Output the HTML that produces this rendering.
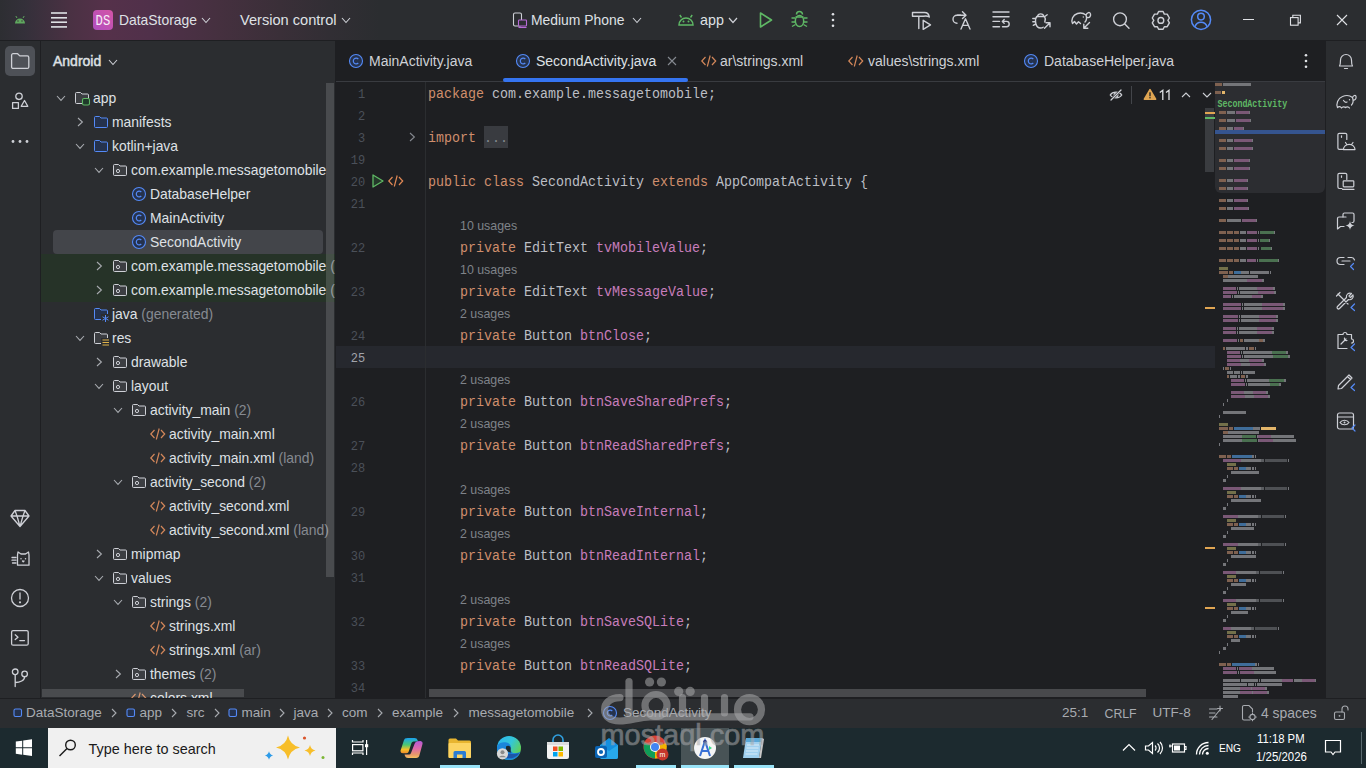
<!DOCTYPE html>
<html><head><meta charset="utf-8">
<style>
*{margin:0;padding:0;box-sizing:border-box}
html,body{width:1366px;height:768px;overflow:hidden;background:#1e1f22;font-family:"Liberation Sans",sans-serif}
.a{position:absolute}
.tx{position:absolute;white-space:pre;line-height:20px}
svg{position:absolute;overflow:visible}
</style></head><body>
<div class="a" style="left:0px;top:0px;width:1366px;height:40px;background:#2b2d30;"></div>
<div class="a" style="left:0;top:0;width:1366px;height:40px;background:linear-gradient(90deg,#2d2e32 0px,#34303a 25px,#4a3143 70px,#55314a 105px,#50304a 150px,#45303f 220px,#3a2f38 280px,#312e34 330px,#2b2d30 380px)"></div>
<div class="a" style="left:0px;top:40px;width:1366px;height:1px;background:#1e1f22;"></div>
<svg style="left:14px;top:14px;" width="12" height="10" viewBox="0 0 12 10"><path d="M1 9.5 A5 5 0 0 1 11 9.5 Z" fill="#5fa85f"/><path d="M3 4 L1.8 2 M9 4 L10.2 2" stroke="#5fa85f" stroke-width="1"/><circle cx="4" cy="7" r="0.7" fill="#3a3035"/><circle cx="8" cy="7" r="0.7" fill="#3a3035"/></svg>
<svg style="left:50px;top:11px;" width="18" height="18" viewBox="0 0 18 18"><rect x="1" y="1.2" width="16" height="1.6" fill="#dfe1e5"/><rect x="1" y="6" width="16" height="1.6" fill="#dfe1e5"/><rect x="1" y="10.4" width="16" height="1.6" fill="#dfe1e5"/><rect x="1" y="15.1" width="16" height="1.6" fill="#dfe1e5"/></svg>
<div class="a" style="left:93px;top:10px;width:20px;height:20px;border-radius:4px;background:linear-gradient(225deg,#d454a6,#b04fc0)"></div>
<div class="tx" style="left:95.6px;top:11.75px;font-size:12.2px;color:#f8eef8;font-family:'Liberation Mono',monospace;transform:scaleY(1.2);transform-origin:0 13.2px;">DS</div>
<div class="tx" style="left:119px;top:10.18px;font-size:13.9px;color:#dfe1e5;font-family:'Liberation Sans',sans-serif;">DataStorage</div>
<svg style="left:201.0px;top:16.75px;" width="10" height="6.5" viewBox="0 0 10 6.5"><path d="M1 1 L5.0 5.5 L9 1" fill="none" stroke="#ced0d6" stroke-width="1.1"/></svg>
<div class="tx" style="left:240px;top:9.94px;font-size:14.6px;color:#dfe1e5;font-family:'Liberation Sans',sans-serif;">Version control</div>
<svg style="left:341.0px;top:16.75px;" width="10" height="6.5" viewBox="0 0 10 6.5"><path d="M1 1 L5.0 5.5 L9 1" fill="none" stroke="#ced0d6" stroke-width="1.1"/></svg>
<svg style="left:512px;top:12px;" width="16" height="17" viewBox="0 0 16 17"><rect x="1.5" y="1" width="8" height="13" rx="1.5" fill="none" stroke="#ced0d6" stroke-width="1.1"/><rect x="6.5" y="8" width="8" height="6" rx="0.8" fill="#2b2d30" stroke="#b86bd8" stroke-width="1.1"/><path d="M6.5 15.5 H14.5" stroke="#b86bd8" stroke-width="1.1"/></svg>
<div class="tx" style="left:531px;top:10.18px;font-size:13.9px;color:#dfe1e5;font-family:'Liberation Sans',sans-serif;">Medium Phone</div>
<svg style="left:632.0px;top:16.75px;" width="10" height="6.5" viewBox="0 0 10 6.5"><path d="M1 1 L5.0 5.5 L9 1" fill="none" stroke="#ced0d6" stroke-width="1.1"/></svg>
<svg style="left:677px;top:10px;" width="18" height="17" viewBox="0 0 18 17"><path d="M2 15 A7 7 0 0 1 16 15 Z" fill="none" stroke="#5fb865" stroke-width="1.5"/><path d="M4.5 7.5 L2.8 5 M13.5 7.5 L15.2 5" stroke="#5fb865" stroke-width="1.4"/><circle cx="6.5" cy="11.5" r="1" fill="#5fb865"/><circle cx="11.5" cy="11.5" r="1" fill="#5fb865"/></svg>
<div class="tx" style="left:700px;top:10.05px;font-size:14.3px;color:#dfe1e5;font-family:'Liberation Sans',sans-serif;">app</div>
<svg style="left:728.0px;top:16.75px;" width="10" height="6.5" viewBox="0 0 10 6.5"><path d="M1 1 L5.0 5.5 L9 1" fill="none" stroke="#ced0d6" stroke-width="1.2"/></svg>
<svg style="left:758px;top:11px;" width="16" height="18" viewBox="0 0 16 18"><path d="M2.5 2 L13.5 9 L2.5 16 Z" fill="none" stroke="#5fb865" stroke-width="1.6" stroke-linejoin="round"/></svg>
<svg style="left:790px;top:10px;" width="19" height="19" viewBox="0 0 19 19"><ellipse cx="9.5" cy="11" rx="4.2" ry="5.5" fill="none" stroke="#5fb865" stroke-width="1.5"/><path d="M6.5 4.5 A3 3 0 0 1 12.5 4.5" fill="none" stroke="#5fb865" stroke-width="1.5"/><path d="M1.5 8 H5 M14 8 H17.5 M1.5 12 H5 M14 12 H17.5 M2 16.5 L5.5 14.5 M17 16.5 L13.5 14.5 M5.5 7 H13.5" stroke="#5fb865" stroke-width="1.4"/></svg>
<svg style="left:831px;top:12px;" width="4" height="16" viewBox="0 0 4 16"><circle cx="2" cy="2.2" r="1.3" fill="#dfe1e5"/><circle cx="2" cy="8" r="1.3" fill="#dfe1e5"/><circle cx="2" cy="13.8" r="1.3" fill="#dfe1e5"/></svg>
<svg style="left:0px;top:0px;" width="1366" height="40" viewBox="0 0 1366 40"><path d="M912.5 12.5 H924.5 C927 12.5 929 14.5 929.3 17 C927.5 15.8 925.5 15.8 923.5 16.2 H912.5 Z M918.8 16.5 V28.5" stroke="#ced0d6" stroke-width="1.4" fill="none" stroke-linecap="round" stroke-linejoin="round"/><path d="M923.2 20.3 L930.5 24.8 L923.2 29.3 Z" stroke="#ced0d6" stroke-width="1.4" fill="none" stroke-linecap="round" stroke-linejoin="round"/><path d="M960.5 15.2 H957 A4 4 0 0 0 957 23.2" stroke="#ced0d6" stroke-width="1.4" fill="none" stroke-linecap="round" stroke-linejoin="round"/><path d="M957.5 15.2 H966 M962.5 11.8 L966 15.2 L962.5 18.6" stroke="#ced0d6" stroke-width="1.4" fill="none" stroke-linecap="round" stroke-linejoin="round"/><path d="M961 29 L965.5 18.8 L970 29 M962.6 25.4 H968.4" stroke="#ced0d6" stroke-width="1.4" fill="none" stroke-linecap="round" stroke-linejoin="round"/><path d="M993 12 H1009 M993 16.7 H1009 M993 21.4 H999.5 M993 26.8 H999.5" stroke="#ced0d6" stroke-width="1.4" fill="none" stroke-linecap="round" stroke-linejoin="round"/><path d="M1002.5 21.4 H1006.5 A2.7 2.7 0 0 1 1006.5 26.8 H1002.5 M1004.2 19.6 L1002.3 21.4 L1004.2 23.2" stroke="#ced0d6" stroke-width="1.4" fill="none" stroke-linecap="round" stroke-linejoin="round"/><path d="M1044.8 22 C1045.5 19.5 1045.5 17.8 1044.5 16.5 H1036.8 C1035.5 18 1035.3 21 1035.8 23.5 C1036.5 26.5 1038.5 28 1040.5 28 C1041.5 28 1042.5 27.7 1043.2 27.2" stroke="#ced0d6" stroke-width="1.4" fill="none" stroke-linecap="round" stroke-linejoin="round"/><path d="M1037.5 16.5 A3.2 3.2 0 0 1 1043.8 16.5 M1032.8 18.5 H1035.5 M1032.8 21.8 H1035.3 M1033.2 25.3 L1035.8 24 M1045.5 16 L1047.2 14.8" stroke="#ced0d6" stroke-width="1.4" fill="none" stroke-linecap="round" stroke-linejoin="round"/><path d="M1044.5 28.2 L1050 22.7 M1046 22.7 H1050 V26.7" stroke="#ced0d6" stroke-width="1.4" fill="none" stroke-linecap="round" stroke-linejoin="round"/><path d="M1072.5 23.5 C1071 20 1072.5 15 1077.5 13.5 C1081 12.5 1084 13.5 1086 15 C1087 12.5 1090 11.5 1090.5 14 C1091 16 1089.5 18 1087.5 17.5 M1086 15 C1087 18 1086.5 20.5 1085 22 M1072.5 23.5 L1074.5 21.5 L1076.5 24 L1078.5 21.8 L1080.5 23.5" stroke="#ced0d6" stroke-width="1.4" fill="none" stroke-linecap="round" stroke-linejoin="round"/><circle cx="1083.3" cy="17" r="0.7" fill="#ced0d6"/><path d="M1089.5 22.5 L1083.8 28.2 M1083.8 24.2 V28.2 H1087.8" stroke="#ced0d6" stroke-width="1.4" fill="none" stroke-linecap="round" stroke-linejoin="round"/><circle cx="1120" cy="19.3" r="6.4" stroke="#ced0d6" stroke-width="1.4" fill="none" stroke-linecap="round" stroke-linejoin="round" stroke-width="1.5"/><path d="M1124.8 24.1 L1129 28.3" stroke="#ced0d6" stroke-width="1.4" fill="none" stroke-linecap="round" stroke-linejoin="round" stroke-width="1.6"/><path d="M1158.6 11.5 H1163.1 L1164.3 14.1 L1167.2 14.1 L1169.4 18 L1167.9 20.4 L1169.4 22.8 L1167.2 26.7 L1164.3 26.7 L1163.1 29.3 H1158.6 L1157.4 26.7 L1154.5 26.7 L1152.3 22.8 L1153.8 20.4 L1152.3 18 L1154.5 14.1 L1157.4 14.1 Z" stroke="#ced0d6" stroke-width="1.4" fill="none" stroke-linecap="round" stroke-linejoin="round" stroke-width="1.4"/><circle cx="1160.85" cy="20.4" r="2.9" stroke="#ced0d6" stroke-width="1.4" fill="none" stroke-linecap="round" stroke-linejoin="round" stroke-width="1.4"/><circle cx="1201" cy="19.8" r="9.6" fill="none" stroke="#548af7" stroke-width="1.5"/><circle cx="1201" cy="16.6" r="3.3" fill="none" stroke="#548af7" stroke-width="1.5"/><path d="M1195 26.8 C1196 23.5 1198.5 22.3 1201 22.3 C1203.5 22.3 1206 23.5 1207 26.8" fill="none" stroke="#548af7" stroke-width="1.5"/></svg>
<div class="a" style="left:1243px;top:19px;width:11px;height:1px;background:#dfe1e5;"></div>
<svg style="left:1289px;top:14px;" width="13" height="13" viewBox="0 0 13 13"><rect x="1.5" y="3.6" width="7.6" height="7.6" fill="none" stroke="#dfe1e5" stroke-width="1.1"/><path d="M3.8 3.6 V1.3 H11.4 V8.9 H9.1" fill="none" stroke="#dfe1e5" stroke-width="1.1"/></svg>
<svg style="left:1336px;top:14px;" width="12" height="12" viewBox="0 0 12 12"><path d="M1 1 L11 11 M11 1 L1 11" stroke="#dfe1e5" stroke-width="1.1"/></svg>
<div class="a" style="left:0px;top:41px;width:40px;height:658px;background:#2b2d30;"></div>
<div class="a" style="left:40px;top:41px;width:1px;height:658px;background:#1e1f22;"></div>
<div class="a" style="left:5px;top:46px;width:30px;height:30px;background:#4e5157;border-radius:5px"></div>
<svg style="left:10px;top:52px;" width="20" height="18" viewBox="0 0 20 18"><path d="M1.6 3.2 A1.5 1.5 0 0 1 3.1 1.7 H7.6 L9.8 3.9 H17.3 A1.5 1.5 0 0 1 18.8 5.4 V14.9 A1.5 1.5 0 0 1 17.3 16.4 H3.1 A1.5 1.5 0 0 1 1.6 14.9 Z" stroke="#ced0d6" stroke-width="1.3" fill="none" stroke-linejoin="round" stroke-linecap="round" stroke-width="1.4"/></svg>
<svg style="left:9px;top:91px;" width="22" height="20" viewBox="0 0 22 20"><circle cx="10" cy="5.3" r="3.2" stroke="#ced0d6" stroke-width="1.3" fill="none" stroke-linejoin="round" stroke-linecap="round"/><rect x="3.6" y="11.6" width="5.8" height="5.8" stroke="#ced0d6" stroke-width="1.3" fill="none" stroke-linejoin="round" stroke-linecap="round"/><path d="M15.5 9.5 L18.8 15.3 H12.2 Z" stroke="#ced0d6" stroke-width="1.3" fill="none" stroke-linejoin="round" stroke-linecap="round"/></svg>
<svg style="left:10px;top:139px;" width="20" height="5" viewBox="0 0 20 5"><circle cx="3" cy="2.5" r="1.4" fill="#ced0d6"/><circle cx="10" cy="2.5" r="1.4" fill="#ced0d6"/><circle cx="17" cy="2.5" r="1.4" fill="#ced0d6"/></svg>
<svg style="left:9px;top:508px;" width="22" height="20" viewBox="0 0 22 20"><path d="M6 2.5 H16 L20 8 L11 18.5 L2 8 Z M2 8 H20 M6 2.5 L8 8 L11 18.5 L14 8 L16 2.5" stroke="#ced0d6" stroke-width="1.3" fill="none" stroke-linejoin="round" stroke-linecap="round"/></svg>
<svg style="left:10px;top:550px;" width="22" height="18" viewBox="0 0 22 18"><path d="M7.5 5 L8 2 L11 4 H15.5 L18.5 2 L19 5 V15.2 H7.5 Z" stroke="#ced0d6" stroke-width="1.3" fill="none" stroke-linejoin="round" stroke-linecap="round"/><path d="M2 7.5 H6 M2 10.2 H6 M2.5 13 H6" stroke="#ced0d6" stroke-width="1.3" fill="none" stroke-linejoin="round" stroke-linecap="round"/><circle cx="11" cy="8.8" r="0.75" fill="#ced0d6"/><circle cx="15.5" cy="8.8" r="0.75" fill="#ced0d6"/><path d="M12.5 11 L13.25 11.8 L14 11" stroke="#ced0d6" stroke-width="1.3" fill="none" stroke-linejoin="round" stroke-linecap="round" stroke-width="1"/></svg>
<svg style="left:9px;top:587px;" width="22" height="22" viewBox="0 0 22 22"><circle cx="11" cy="11" r="8.5" stroke="#ced0d6" stroke-width="1.3" fill="none" stroke-linejoin="round" stroke-linecap="round"/><path d="M11 6 V12" stroke="#ced0d6" stroke-width="1.3" fill="none" stroke-linejoin="round" stroke-linecap="round" stroke-width="1.8"/><circle cx="11" cy="15.3" r="1.1" fill="#ced0d6"/></svg>
<svg style="left:9px;top:628px;" width="22" height="20" viewBox="0 0 22 20"><rect x="2.6" y="2.6" width="16.6" height="14.6" rx="1.5" stroke="#ced0d6" stroke-width="1.3" fill="none" stroke-linejoin="round" stroke-linecap="round"/><path d="M6.2 6.8 L9 9.2 L6.2 11.6 M10.8 12.6 H15.5" stroke="#ced0d6" stroke-width="1.3" fill="none" stroke-linejoin="round" stroke-linecap="round"/></svg>
<svg style="left:9px;top:667px;" width="22" height="22" viewBox="0 0 22 22"><circle cx="6.2" cy="4.8" r="2.8" stroke="#ced0d6" stroke-width="1.3" fill="none" stroke-linejoin="round" stroke-linecap="round"/><circle cx="15.6" cy="6.9" r="2.8" stroke="#ced0d6" stroke-width="1.3" fill="none" stroke-linejoin="round" stroke-linecap="round"/><path d="M6.2 7.6 V19.5 M15.6 9.7 C15.6 13.5 11 15.5 6.2 15.5" stroke="#ced0d6" stroke-width="1.3" fill="none" stroke-linejoin="round" stroke-linecap="round"/></svg>
<div class="a" style="left:41px;top:41px;width:294px;height:658px;background:#2b2d30;"></div>
<div class="a" style="left:335px;top:41px;width:1px;height:658px;background:#1e1f22;"></div>
<div class="tx" style="left:53px;top:51.15px;font-size:14.0px;color:#dfe1e5;font-family:'Liberation Sans',sans-serif;-webkit-text-stroke:0.45px #dfe1e5;">Android</div>
<svg style="left:108.0px;top:58.75px;" width="10" height="6.5" viewBox="0 0 10 6.5"><path d="M1 1 L5.0 5.5 L9 1" fill="none" stroke="#ced0d6" stroke-width="1.1"/></svg>
<div class="a" style="left:41px;top:254px;width:294px;height:48px;background:#263328;"></div>
<div class="a" style="left:53px;top:230px;width:270px;height:24px;background:#43454a;border-radius:4px"></div>
<div class="a" style="left:41px;top:83px;width:294px;height:615px;overflow:hidden">
<svg style="left:15.0px;top:11.8px;" width="10" height="6.4" viewBox="0 0 10 6.4"><path d="M1 1 L5.0 5.4 L9 1" fill="none" stroke="#a8abb0" stroke-width="1.1"/></svg>
<svg style="left:33px;top:8px;" width="18" height="16" viewBox="0 0 18 16"><path d="M1.5 2.5 A1 1 0 0 1 2.5 1.5 H6.5 L8 3 H13.5 A1 1 0 0 1 14.5 4 V11.5 A1 1 0 0 1 13.5 12.5 H2.5 A1 1 0 0 1 1.5 11.5 Z" fill="#3c3e42" stroke="#ced0d6" stroke-width="1.0"/><rect x="8.5" y="7.5" width="7" height="6.5" rx="1.5" fill="#1f3a2a" stroke="#5fb865" stroke-width="1.1"/></svg>
<div class="tx" style="left:52px;top:5.08px;font-size:13.9px;color:#dfe1e5;font-family:'Liberation Sans',sans-serif;">app</div>
<svg style="left:35.8px;top:34.0px;" width="6.4" height="10" viewBox="0 0 6.4 10"><path d="M1 1 L5.4 5.0 L1 9" fill="none" stroke="#a8abb0" stroke-width="1.1"/></svg>
<svg style="left:52px;top:32px;" width="16" height="14" viewBox="0 0 16 14"><path d="M1.5 2.5 A1 1 0 0 1 2.5 1.5 H6.5 L8 3 H13.5 A1 1 0 0 1 14.5 4 V11.5 A1 1 0 0 1 13.5 12.5 H2.5 A1 1 0 0 1 1.5 11.5 Z" fill="#25324d" stroke="#548af7" stroke-width="1.0"/></svg>
<div class="tx" style="left:71px;top:29.08px;font-size:13.9px;color:#dfe1e5;font-family:'Liberation Sans',sans-serif;">manifests</div>
<svg style="left:34.0px;top:59.8px;" width="10" height="6.4" viewBox="0 0 10 6.4"><path d="M1 1 L5.0 5.4 L9 1" fill="none" stroke="#a8abb0" stroke-width="1.1"/></svg>
<svg style="left:52px;top:56px;" width="16" height="14" viewBox="0 0 16 14"><path d="M1.5 2.5 A1 1 0 0 1 2.5 1.5 H6.5 L8 3 H13.5 A1 1 0 0 1 14.5 4 V11.5 A1 1 0 0 1 13.5 12.5 H2.5 A1 1 0 0 1 1.5 11.5 Z" fill="#25324d" stroke="#548af7" stroke-width="1.0"/></svg>
<div class="tx" style="left:71px;top:53.08px;font-size:13.9px;color:#dfe1e5;font-family:'Liberation Sans',sans-serif;">kotlin+java</div>
<svg style="left:53.0px;top:83.8px;" width="10" height="6.4" viewBox="0 0 10 6.4"><path d="M1 1 L5.0 5.4 L9 1" fill="none" stroke="#a8abb0" stroke-width="1.1"/></svg>
<svg style="left:71px;top:80px;" width="16" height="14" viewBox="0 0 16 14"><path d="M1.5 2.5 A1 1 0 0 1 2.5 1.5 H6.5 L8 3 H13.5 A1 1 0 0 1 14.5 4 V11.5 A1 1 0 0 1 13.5 12.5 H2.5 A1 1 0 0 1 1.5 11.5 Z" fill="#3c3e42" stroke="#ced0d6" stroke-width="1.0"/><circle cx="6" cy="8" r="1.6" fill="none" stroke="#ced0d6" stroke-width="1"/></svg>
<div class="tx" style="left:90px;top:77.08px;font-size:13.9px;color:#dfe1e5;font-family:'Liberation Sans',sans-serif;">com.example.messagetomobile</div>
<svg style="left:90px;top:103px;" width="16" height="16" viewBox="0 0 16 16"><circle cx="8" cy="8" r="6.5" fill="#25324d" stroke="#548af7" stroke-width="1.1"/><path d="M10.3 6 A2.9 2.9 0 1 0 10.3 10" fill="none" stroke="#548af7" stroke-width="1.2"/></svg>
<div class="tx" style="left:109px;top:101.08px;font-size:13.9px;color:#dfe1e5;font-family:'Liberation Sans',sans-serif;">DatabaseHelper</div>
<svg style="left:90px;top:127px;" width="16" height="16" viewBox="0 0 16 16"><circle cx="8" cy="8" r="6.5" fill="#25324d" stroke="#548af7" stroke-width="1.1"/><path d="M10.3 6 A2.9 2.9 0 1 0 10.3 10" fill="none" stroke="#548af7" stroke-width="1.2"/></svg>
<div class="tx" style="left:109px;top:125.08px;font-size:13.9px;color:#dfe1e5;font-family:'Liberation Sans',sans-serif;">MainActivity</div>
<svg style="left:90px;top:151px;" width="16" height="16" viewBox="0 0 16 16"><circle cx="8" cy="8" r="6.5" fill="#25324d" stroke="#548af7" stroke-width="1.1"/><path d="M10.3 6 A2.9 2.9 0 1 0 10.3 10" fill="none" stroke="#548af7" stroke-width="1.2"/></svg>
<div class="tx" style="left:109px;top:149.08px;font-size:13.9px;color:#dfe1e5;font-family:'Liberation Sans',sans-serif;">SecondActivity</div>
<svg style="left:54.8px;top:178.0px;" width="6.4" height="10" viewBox="0 0 6.4 10"><path d="M1 1 L5.4 5.0 L1 9" fill="none" stroke="#a8abb0" stroke-width="1.1"/></svg>
<svg style="left:71px;top:176px;" width="16" height="14" viewBox="0 0 16 14"><path d="M1.5 2.5 A1 1 0 0 1 2.5 1.5 H6.5 L8 3 H13.5 A1 1 0 0 1 14.5 4 V11.5 A1 1 0 0 1 13.5 12.5 H2.5 A1 1 0 0 1 1.5 11.5 Z" fill="#3c3e42" stroke="#ced0d6" stroke-width="1.0"/><circle cx="6" cy="8" r="1.6" fill="none" stroke="#ced0d6" stroke-width="1"/></svg>
<div class="tx" style="left:90px;top:173.08px;font-size:13.9px;color:#dfe1e5;font-family:'Liberation Sans',sans-serif;">com.example.messagetomobile<span style="color:#868a91"> (</span></div>
<svg style="left:54.8px;top:202.0px;" width="6.4" height="10" viewBox="0 0 6.4 10"><path d="M1 1 L5.4 5.0 L1 9" fill="none" stroke="#a8abb0" stroke-width="1.1"/></svg>
<svg style="left:71px;top:200px;" width="16" height="14" viewBox="0 0 16 14"><path d="M1.5 2.5 A1 1 0 0 1 2.5 1.5 H6.5 L8 3 H13.5 A1 1 0 0 1 14.5 4 V11.5 A1 1 0 0 1 13.5 12.5 H2.5 A1 1 0 0 1 1.5 11.5 Z" fill="#3c3e42" stroke="#ced0d6" stroke-width="1.0"/><circle cx="6" cy="8" r="1.6" fill="none" stroke="#ced0d6" stroke-width="1"/></svg>
<div class="tx" style="left:90px;top:197.08px;font-size:13.9px;color:#dfe1e5;font-family:'Liberation Sans',sans-serif;">com.example.messagetomobile<span style="color:#868a91"> (</span></div>
<svg style="left:52px;top:224px;" width="18" height="16" viewBox="0 0 18 16"><path d="M1.5 2.5 A1 1 0 0 1 2.5 1.5 H6.5 L8 3 H13.5 A1 1 0 0 1 14.5 4 V11.5 A1 1 0 0 1 13.5 12.5 H2.5 A1 1 0 0 1 1.5 11.5 Z" fill="#25324d" stroke="#548af7" stroke-width="1.0"/><rect x="8" y="7" width="9" height="9" fill="#2b2d30"/><path d="M12.5 8 V15 M9.5 9.8 L15.5 13.2 M15.5 9.8 L9.5 13.2" stroke="#548af7" stroke-width="1"/></svg>
<div class="tx" style="left:71px;top:221.08px;font-size:13.9px;color:#dfe1e5;font-family:'Liberation Sans',sans-serif;">java<span style="color:#868a91"> (generated)</span></div>
<svg style="left:34.0px;top:251.8px;" width="10" height="6.4" viewBox="0 0 10 6.4"><path d="M1 1 L5.0 5.4 L9 1" fill="none" stroke="#a8abb0" stroke-width="1.1"/></svg>
<svg style="left:52px;top:248px;" width="18" height="16" viewBox="0 0 18 16"><path d="M1.5 2.5 A1 1 0 0 1 2.5 1.5 H6.5 L8 3 H13.5 A1 1 0 0 1 14.5 4 V11.5 A1 1 0 0 1 13.5 12.5 H2.5 A1 1 0 0 1 1.5 11.5 Z" fill="#3c3e42" stroke="#ced0d6" stroke-width="1.0"/><rect x="8" y="7" width="9" height="9" fill="#2b2d30"/><path d="M9.5 9 H16 M9.5 11.5 H16 M9.5 14 H16" stroke="#e0b34a" stroke-width="1.2"/></svg>
<div class="tx" style="left:71px;top:245.08px;font-size:13.9px;color:#dfe1e5;font-family:'Liberation Sans',sans-serif;">res</div>
<svg style="left:54.8px;top:274.0px;" width="6.4" height="10" viewBox="0 0 6.4 10"><path d="M1 1 L5.4 5.0 L1 9" fill="none" stroke="#a8abb0" stroke-width="1.1"/></svg>
<svg style="left:71px;top:272px;" width="16" height="14" viewBox="0 0 16 14"><path d="M1.5 2.5 A1 1 0 0 1 2.5 1.5 H6.5 L8 3 H13.5 A1 1 0 0 1 14.5 4 V11.5 A1 1 0 0 1 13.5 12.5 H2.5 A1 1 0 0 1 1.5 11.5 Z" fill="#3c3e42" stroke="#ced0d6" stroke-width="1.0"/><circle cx="6" cy="8" r="1.6" fill="none" stroke="#ced0d6" stroke-width="1"/></svg>
<div class="tx" style="left:90px;top:269.08px;font-size:13.9px;color:#dfe1e5;font-family:'Liberation Sans',sans-serif;">drawable</div>
<svg style="left:53.0px;top:299.8px;" width="10" height="6.4" viewBox="0 0 10 6.4"><path d="M1 1 L5.0 5.4 L9 1" fill="none" stroke="#a8abb0" stroke-width="1.1"/></svg>
<svg style="left:71px;top:296px;" width="16" height="14" viewBox="0 0 16 14"><path d="M1.5 2.5 A1 1 0 0 1 2.5 1.5 H6.5 L8 3 H13.5 A1 1 0 0 1 14.5 4 V11.5 A1 1 0 0 1 13.5 12.5 H2.5 A1 1 0 0 1 1.5 11.5 Z" fill="#3c3e42" stroke="#ced0d6" stroke-width="1.0"/><circle cx="6" cy="8" r="1.6" fill="none" stroke="#ced0d6" stroke-width="1"/></svg>
<div class="tx" style="left:90px;top:293.08px;font-size:13.9px;color:#dfe1e5;font-family:'Liberation Sans',sans-serif;">layout</div>
<svg style="left:72.0px;top:323.8px;" width="10" height="6.4" viewBox="0 0 10 6.4"><path d="M1 1 L5.0 5.4 L9 1" fill="none" stroke="#a8abb0" stroke-width="1.1"/></svg>
<svg style="left:90px;top:320px;" width="16" height="14" viewBox="0 0 16 14"><path d="M1.5 2.5 A1 1 0 0 1 2.5 1.5 H6.5 L8 3 H13.5 A1 1 0 0 1 14.5 4 V11.5 A1 1 0 0 1 13.5 12.5 H2.5 A1 1 0 0 1 1.5 11.5 Z" fill="#3c3e42" stroke="#ced0d6" stroke-width="1.0"/><circle cx="6" cy="8" r="1.6" fill="none" stroke="#ced0d6" stroke-width="1"/></svg>
<div class="tx" style="left:109px;top:317.08px;font-size:13.9px;color:#dfe1e5;font-family:'Liberation Sans',sans-serif;">activity_main<span style="color:#868a91"> (2)</span></div>
<svg style="left:108px;top:344px;" width="18" height="14" viewBox="0 0 18 14"><path d="M5.5 3 L1.8 7 L5.5 11 M12 3 L15.7 7 L12 11 M10.2 1.5 L7.3 12.5" fill="none" stroke="#d3875a" stroke-width="1.2"/></svg>
<div class="tx" style="left:128px;top:341.08px;font-size:13.9px;color:#dfe1e5;font-family:'Liberation Sans',sans-serif;">activity_main.xml</div>
<svg style="left:108px;top:368px;" width="18" height="14" viewBox="0 0 18 14"><path d="M5.5 3 L1.8 7 L5.5 11 M12 3 L15.7 7 L12 11 M10.2 1.5 L7.3 12.5" fill="none" stroke="#d3875a" stroke-width="1.2"/></svg>
<div class="tx" style="left:128px;top:365.08px;font-size:13.9px;color:#dfe1e5;font-family:'Liberation Sans',sans-serif;">activity_main.xml<span style="color:#868a91"> (land)</span></div>
<svg style="left:72.0px;top:395.8px;" width="10" height="6.4" viewBox="0 0 10 6.4"><path d="M1 1 L5.0 5.4 L9 1" fill="none" stroke="#a8abb0" stroke-width="1.1"/></svg>
<svg style="left:90px;top:392px;" width="16" height="14" viewBox="0 0 16 14"><path d="M1.5 2.5 A1 1 0 0 1 2.5 1.5 H6.5 L8 3 H13.5 A1 1 0 0 1 14.5 4 V11.5 A1 1 0 0 1 13.5 12.5 H2.5 A1 1 0 0 1 1.5 11.5 Z" fill="#3c3e42" stroke="#ced0d6" stroke-width="1.0"/><circle cx="6" cy="8" r="1.6" fill="none" stroke="#ced0d6" stroke-width="1"/></svg>
<div class="tx" style="left:109px;top:389.08px;font-size:13.9px;color:#dfe1e5;font-family:'Liberation Sans',sans-serif;">activity_second<span style="color:#868a91"> (2)</span></div>
<svg style="left:108px;top:416px;" width="18" height="14" viewBox="0 0 18 14"><path d="M5.5 3 L1.8 7 L5.5 11 M12 3 L15.7 7 L12 11 M10.2 1.5 L7.3 12.5" fill="none" stroke="#d3875a" stroke-width="1.2"/></svg>
<div class="tx" style="left:128px;top:413.08px;font-size:13.9px;color:#dfe1e5;font-family:'Liberation Sans',sans-serif;">activity_second.xml</div>
<svg style="left:108px;top:440px;" width="18" height="14" viewBox="0 0 18 14"><path d="M5.5 3 L1.8 7 L5.5 11 M12 3 L15.7 7 L12 11 M10.2 1.5 L7.3 12.5" fill="none" stroke="#d3875a" stroke-width="1.2"/></svg>
<div class="tx" style="left:128px;top:437.08px;font-size:13.9px;color:#dfe1e5;font-family:'Liberation Sans',sans-serif;">activity_second.xml<span style="color:#868a91"> (land)</span></div>
<svg style="left:54.8px;top:466.0px;" width="6.4" height="10" viewBox="0 0 6.4 10"><path d="M1 1 L5.4 5.0 L1 9" fill="none" stroke="#a8abb0" stroke-width="1.1"/></svg>
<svg style="left:71px;top:464px;" width="16" height="14" viewBox="0 0 16 14"><path d="M1.5 2.5 A1 1 0 0 1 2.5 1.5 H6.5 L8 3 H13.5 A1 1 0 0 1 14.5 4 V11.5 A1 1 0 0 1 13.5 12.5 H2.5 A1 1 0 0 1 1.5 11.5 Z" fill="#3c3e42" stroke="#ced0d6" stroke-width="1.0"/><circle cx="6" cy="8" r="1.6" fill="none" stroke="#ced0d6" stroke-width="1"/></svg>
<div class="tx" style="left:90px;top:461.08px;font-size:13.9px;color:#dfe1e5;font-family:'Liberation Sans',sans-serif;">mipmap</div>
<svg style="left:53.0px;top:491.8px;" width="10" height="6.4" viewBox="0 0 10 6.4"><path d="M1 1 L5.0 5.4 L9 1" fill="none" stroke="#a8abb0" stroke-width="1.1"/></svg>
<svg style="left:71px;top:488px;" width="16" height="14" viewBox="0 0 16 14"><path d="M1.5 2.5 A1 1 0 0 1 2.5 1.5 H6.5 L8 3 H13.5 A1 1 0 0 1 14.5 4 V11.5 A1 1 0 0 1 13.5 12.5 H2.5 A1 1 0 0 1 1.5 11.5 Z" fill="#3c3e42" stroke="#ced0d6" stroke-width="1.0"/><circle cx="6" cy="8" r="1.6" fill="none" stroke="#ced0d6" stroke-width="1"/></svg>
<div class="tx" style="left:90px;top:485.08px;font-size:13.9px;color:#dfe1e5;font-family:'Liberation Sans',sans-serif;">values</div>
<svg style="left:72.0px;top:515.8px;" width="10" height="6.4" viewBox="0 0 10 6.4"><path d="M1 1 L5.0 5.4 L9 1" fill="none" stroke="#a8abb0" stroke-width="1.1"/></svg>
<svg style="left:90px;top:512px;" width="16" height="14" viewBox="0 0 16 14"><path d="M1.5 2.5 A1 1 0 0 1 2.5 1.5 H6.5 L8 3 H13.5 A1 1 0 0 1 14.5 4 V11.5 A1 1 0 0 1 13.5 12.5 H2.5 A1 1 0 0 1 1.5 11.5 Z" fill="#3c3e42" stroke="#ced0d6" stroke-width="1.0"/><circle cx="6" cy="8" r="1.6" fill="none" stroke="#ced0d6" stroke-width="1"/></svg>
<div class="tx" style="left:109px;top:509.08px;font-size:13.9px;color:#dfe1e5;font-family:'Liberation Sans',sans-serif;">strings<span style="color:#868a91"> (2)</span></div>
<svg style="left:108px;top:536px;" width="18" height="14" viewBox="0 0 18 14"><path d="M5.5 3 L1.8 7 L5.5 11 M12 3 L15.7 7 L12 11 M10.2 1.5 L7.3 12.5" fill="none" stroke="#d3875a" stroke-width="1.2"/></svg>
<div class="tx" style="left:128px;top:533.08px;font-size:13.9px;color:#dfe1e5;font-family:'Liberation Sans',sans-serif;">strings.xml</div>
<svg style="left:108px;top:560px;" width="18" height="14" viewBox="0 0 18 14"><path d="M5.5 3 L1.8 7 L5.5 11 M12 3 L15.7 7 L12 11 M10.2 1.5 L7.3 12.5" fill="none" stroke="#d3875a" stroke-width="1.2"/></svg>
<div class="tx" style="left:128px;top:557.08px;font-size:13.9px;color:#dfe1e5;font-family:'Liberation Sans',sans-serif;">strings.xml<span style="color:#868a91"> (ar)</span></div>
<svg style="left:73.8px;top:586.0px;" width="6.4" height="10" viewBox="0 0 6.4 10"><path d="M1 1 L5.4 5.0 L1 9" fill="none" stroke="#a8abb0" stroke-width="1.1"/></svg>
<svg style="left:90px;top:584px;" width="16" height="14" viewBox="0 0 16 14"><path d="M1.5 2.5 A1 1 0 0 1 2.5 1.5 H6.5 L8 3 H13.5 A1 1 0 0 1 14.5 4 V11.5 A1 1 0 0 1 13.5 12.5 H2.5 A1 1 0 0 1 1.5 11.5 Z" fill="#3c3e42" stroke="#ced0d6" stroke-width="1.0"/><circle cx="6" cy="8" r="1.6" fill="none" stroke="#ced0d6" stroke-width="1"/></svg>
<div class="tx" style="left:109px;top:581.08px;font-size:13.9px;color:#dfe1e5;font-family:'Liberation Sans',sans-serif;">themes<span style="color:#868a91"> (2)</span></div>
<svg style="left:89px;top:608px;" width="18" height="14" viewBox="0 0 18 14"><path d="M5.5 3 L1.8 7 L5.5 11 M12 3 L15.7 7 L12 11 M10.2 1.5 L7.3 12.5" fill="none" stroke="#d3875a" stroke-width="1.2"/></svg>
<div class="tx" style="left:109px;top:605.08px;font-size:13.9px;color:#dfe1e5;font-family:'Liberation Sans',sans-serif;">colors.xml</div>
</div>
<div class="a" style="left:326px;top:83px;width:8px;height:494px;background:rgba(255,255,255,0.145);"></div>
<div class="a" style="left:42px;top:689px;width:202px;height:8px;background:rgba(255,255,255,0.145);"></div>
<div class="a" style="left:336px;top:41px;width:989px;height:658px;background:#1e1f22;"></div>
<div class="a" style="left:336px;top:81px;width:989px;height:1px;background:#393b40;"></div>
<svg style="left:348px;top:53px;" width="16" height="16" viewBox="0 0 16 16"><circle cx="8" cy="8" r="6.5" fill="#25324d" stroke="#548af7" stroke-width="1.1"/><path d="M10.3 6 A2.9 2.9 0 1 0 10.3 10" fill="none" stroke="#548af7" stroke-width="1.2"/></svg>
<div class="tx" style="left:369px;top:51.15px;font-size:14.0px;color:#cfd1d6;font-family:'Liberation Sans',sans-serif;">MainActivity.java</div>
<svg style="left:515px;top:53px;" width="16" height="16" viewBox="0 0 16 16"><circle cx="8" cy="8" r="6.5" fill="#25324d" stroke="#548af7" stroke-width="1.1"/><path d="M10.3 6 A2.9 2.9 0 1 0 10.3 10" fill="none" stroke="#548af7" stroke-width="1.2"/></svg>
<div class="tx" style="left:536px;top:51.15px;font-size:14.0px;color:#dfe1e5;font-family:'Liberation Sans',sans-serif;">SecondActivity.java</div>
<svg style="left:700px;top:54px;" width="18" height="14" viewBox="0 0 18 14"><path d="M5.5 3 L1.8 7 L5.5 11 M12 3 L15.7 7 L12 11 M10.2 1.5 L7.3 12.5" fill="none" stroke="#d3875a" stroke-width="1.2"/></svg>
<div class="tx" style="left:720px;top:51.15px;font-size:14.0px;color:#cfd1d6;font-family:'Liberation Sans',sans-serif;">ar\strings.xml</div>
<svg style="left:847px;top:54px;" width="18" height="14" viewBox="0 0 18 14"><path d="M5.5 3 L1.8 7 L5.5 11 M12 3 L15.7 7 L12 11 M10.2 1.5 L7.3 12.5" fill="none" stroke="#d3875a" stroke-width="1.2"/></svg>
<div class="tx" style="left:868px;top:51.15px;font-size:14.0px;color:#cfd1d6;font-family:'Liberation Sans',sans-serif;">values\strings.xml</div>
<svg style="left:1023px;top:53px;" width="16" height="16" viewBox="0 0 16 16"><circle cx="8" cy="8" r="6.5" fill="#25324d" stroke="#548af7" stroke-width="1.1"/><path d="M10.3 6 A2.9 2.9 0 1 0 10.3 10" fill="none" stroke="#548af7" stroke-width="1.2"/></svg>
<div class="tx" style="left:1044px;top:51.15px;font-size:14.0px;color:#cfd1d6;font-family:'Liberation Sans',sans-serif;">DatabaseHelper.java</div>
<svg style="left:667px;top:56px;" width="10" height="10" viewBox="0 0 10 10"><path d="M1 1 L9 9 M9 1 L1 9" stroke="#868a91" stroke-width="1.1"/></svg>
<div class="a" style="left:503px;top:78px;width:185px;height:3.5px;background:#3574f0;border-radius:2px"></div>
<svg style="left:1304px;top:53px;" width="4" height="16" viewBox="0 0 4 16"><circle cx="2" cy="2.2" r="1.3" fill="#dfe1e5"/><circle cx="2" cy="8" r="1.3" fill="#dfe1e5"/><circle cx="2" cy="13.8" r="1.3" fill="#dfe1e5"/></svg>
<div class="a" style="left:336px;top:346px;width:879px;height:22px;background:#26282e;"></div>
<div class="a" style="left:425px;top:82px;width:1px;height:616px;background:#2b2d30;"></div>
<div class="tx" style="left:358.0px;top:85.30px;font-size:12.0px;color:#4b5059;font-family:'Liberation Mono',monospace;transform:scaleY(1.12);transform-origin:0 13.3px;">1</div>
<div class="tx" style="left:358.0px;top:107.30px;font-size:12.0px;color:#4b5059;font-family:'Liberation Mono',monospace;transform:scaleY(1.12);transform-origin:0 13.3px;">2</div>
<div class="tx" style="left:358.0px;top:129.30px;font-size:12.0px;color:#4b5059;font-family:'Liberation Mono',monospace;transform:scaleY(1.12);transform-origin:0 13.3px;">3</div>
<div class="tx" style="left:350.8px;top:151.30px;font-size:12.0px;color:#4b5059;font-family:'Liberation Mono',monospace;transform:scaleY(1.12);transform-origin:0 13.3px;">19</div>
<div class="tx" style="left:350.8px;top:173.30px;font-size:12.0px;color:#4b5059;font-family:'Liberation Mono',monospace;transform:scaleY(1.12);transform-origin:0 13.3px;">20</div>
<div class="tx" style="left:350.8px;top:195.30px;font-size:12.0px;color:#4b5059;font-family:'Liberation Mono',monospace;transform:scaleY(1.12);transform-origin:0 13.3px;">21</div>
<div class="tx" style="left:350.8px;top:239.30px;font-size:12.0px;color:#4b5059;font-family:'Liberation Mono',monospace;transform:scaleY(1.12);transform-origin:0 13.3px;">22</div>
<div class="tx" style="left:350.8px;top:283.30px;font-size:12.0px;color:#4b5059;font-family:'Liberation Mono',monospace;transform:scaleY(1.12);transform-origin:0 13.3px;">23</div>
<div class="tx" style="left:350.8px;top:327.30px;font-size:12.0px;color:#4b5059;font-family:'Liberation Mono',monospace;transform:scaleY(1.12);transform-origin:0 13.3px;">24</div>
<div class="tx" style="left:350.8px;top:349.30px;font-size:12.0px;color:#a1a3ab;font-family:'Liberation Mono',monospace;transform:scaleY(1.12);transform-origin:0 13.3px;">25</div>
<div class="tx" style="left:350.8px;top:393.30px;font-size:12.0px;color:#4b5059;font-family:'Liberation Mono',monospace;transform:scaleY(1.12);transform-origin:0 13.3px;">26</div>
<div class="tx" style="left:350.8px;top:437.30px;font-size:12.0px;color:#4b5059;font-family:'Liberation Mono',monospace;transform:scaleY(1.12);transform-origin:0 13.3px;">27</div>
<div class="tx" style="left:350.8px;top:459.30px;font-size:12.0px;color:#4b5059;font-family:'Liberation Mono',monospace;transform:scaleY(1.12);transform-origin:0 13.3px;">28</div>
<div class="tx" style="left:350.8px;top:503.30px;font-size:12.0px;color:#4b5059;font-family:'Liberation Mono',monospace;transform:scaleY(1.12);transform-origin:0 13.3px;">29</div>
<div class="tx" style="left:350.8px;top:547.30px;font-size:12.0px;color:#4b5059;font-family:'Liberation Mono',monospace;transform:scaleY(1.12);transform-origin:0 13.3px;">30</div>
<div class="tx" style="left:350.8px;top:569.30px;font-size:12.0px;color:#4b5059;font-family:'Liberation Mono',monospace;transform:scaleY(1.12);transform-origin:0 13.3px;">31</div>
<div class="tx" style="left:350.8px;top:613.30px;font-size:12.0px;color:#4b5059;font-family:'Liberation Mono',monospace;transform:scaleY(1.12);transform-origin:0 13.3px;">32</div>
<div class="tx" style="left:350.8px;top:657.30px;font-size:12.0px;color:#4b5059;font-family:'Liberation Mono',monospace;transform:scaleY(1.12);transform-origin:0 13.3px;">33</div>
<div class="tx" style="left:350.8px;top:679.30px;font-size:12.0px;color:#4b5059;font-family:'Liberation Mono',monospace;transform:scaleY(1.12);transform-origin:0 13.3px;">34</div>
<svg style="left:371px;top:173px;" width="14" height="16" viewBox="0 0 14 16"><path d="M2 2 L12 8 L2 14 Z" fill="#24372a" stroke="#5fb865" stroke-width="1.3" stroke-linejoin="round"/></svg>
<svg style="left:387px;top:174px;" width="18" height="14" viewBox="0 0 18 14"><path d="M5.5 3 L1.8 7 L5.5 11 M12 3 L15.7 7 L12 11 M10.2 1.5 L7.3 12.5" fill="none" stroke="#e08855" stroke-width="1.2"/></svg>
<svg style="left:409.3px;top:132.0px;" width="6.4" height="10" viewBox="0 0 6.4 10"><path d="M1 1 L5.4 5.0 L1 9" fill="none" stroke="#868a91" stroke-width="1.1"/></svg>
<div class="tx" style="left:428px;top:84.95px;font-size:13.33px;color:#bcbec4;font-family:'Liberation Mono',monospace;transform:scaleY(1.14);transform-origin:0 13.55px;"><span style="color:#cf8e6d">package</span> com.example.messagetomobile;</div>
<div class="tx" style="left:428px;top:128.95px;font-size:13.33px;color:#bcbec4;font-family:'Liberation Mono',monospace;transform:scaleY(1.14);transform-origin:0 13.55px;"><span style="color:#cf8e6d">import </span></div>
<div class="a" style="left:484px;top:126px;width:24px;height:22px;background:#393b40;"></div>
<div class="tx" style="left:484px;top:129.45px;font-size:13.33px;color:#868a91;font-family:'Liberation Mono',monospace;">...</div>
<div class="tx" style="left:428px;top:172.95px;font-size:13.33px;color:#bcbec4;font-family:'Liberation Mono',monospace;transform:scaleY(1.14);transform-origin:0 13.55px;"><span style="color:#cf8e6d">public class </span>SecondActivity <span style="color:#cf8e6d">extends </span>AppCompatActivity {</div>
<div class="tx" style="left:460px;top:215.70px;font-size:12.4px;color:#7f8389;font-family:'Liberation Sans',sans-serif;">10 usages</div>
<div class="tx" style="left:460px;top:259.70px;font-size:12.4px;color:#7f8389;font-family:'Liberation Sans',sans-serif;">10 usages</div>
<div class="tx" style="left:460px;top:303.70px;font-size:12.4px;color:#7f8389;font-family:'Liberation Sans',sans-serif;">2 usages</div>
<div class="tx" style="left:460px;top:369.70px;font-size:12.4px;color:#7f8389;font-family:'Liberation Sans',sans-serif;">2 usages</div>
<div class="tx" style="left:460px;top:413.70px;font-size:12.4px;color:#7f8389;font-family:'Liberation Sans',sans-serif;">2 usages</div>
<div class="tx" style="left:460px;top:479.70px;font-size:12.4px;color:#7f8389;font-family:'Liberation Sans',sans-serif;">2 usages</div>
<div class="tx" style="left:460px;top:523.70px;font-size:12.4px;color:#7f8389;font-family:'Liberation Sans',sans-serif;">2 usages</div>
<div class="tx" style="left:460px;top:589.70px;font-size:12.4px;color:#7f8389;font-family:'Liberation Sans',sans-serif;">2 usages</div>
<div class="tx" style="left:460px;top:633.70px;font-size:12.4px;color:#7f8389;font-family:'Liberation Sans',sans-serif;">2 usages</div>
<div class="tx" style="left:428px;top:238.95px;font-size:13.33px;color:#bcbec4;font-family:'Liberation Mono',monospace;transform:scaleY(1.14);transform-origin:0 13.55px;"><span style="color:#cf8e6d">    private </span>EditText <span style="color:#c77dbb">tvMobileValue</span>;</div>
<div class="tx" style="left:428px;top:282.95px;font-size:13.33px;color:#bcbec4;font-family:'Liberation Mono',monospace;transform:scaleY(1.14);transform-origin:0 13.55px;"><span style="color:#cf8e6d">    private </span>EditText <span style="color:#c77dbb">tvMessageValue</span>;</div>
<div class="tx" style="left:428px;top:326.95px;font-size:13.33px;color:#bcbec4;font-family:'Liberation Mono',monospace;transform:scaleY(1.14);transform-origin:0 13.55px;"><span style="color:#cf8e6d">    private </span>Button <span style="color:#c77dbb">btnClose</span>;</div>
<div class="tx" style="left:428px;top:392.95px;font-size:13.33px;color:#bcbec4;font-family:'Liberation Mono',monospace;transform:scaleY(1.14);transform-origin:0 13.55px;"><span style="color:#cf8e6d">    private </span>Button <span style="color:#c77dbb">btnSaveSharedPrefs</span>;</div>
<div class="tx" style="left:428px;top:436.95px;font-size:13.33px;color:#bcbec4;font-family:'Liberation Mono',monospace;transform:scaleY(1.14);transform-origin:0 13.55px;"><span style="color:#cf8e6d">    private </span>Button <span style="color:#c77dbb">btnReadSharedPrefs</span>;</div>
<div class="tx" style="left:428px;top:502.95px;font-size:13.33px;color:#bcbec4;font-family:'Liberation Mono',monospace;transform:scaleY(1.14);transform-origin:0 13.55px;"><span style="color:#cf8e6d">    private </span>Button <span style="color:#c77dbb">btnSaveInternal</span>;</div>
<div class="tx" style="left:428px;top:546.95px;font-size:13.33px;color:#bcbec4;font-family:'Liberation Mono',monospace;transform:scaleY(1.14);transform-origin:0 13.55px;"><span style="color:#cf8e6d">    private </span>Button <span style="color:#c77dbb">btnReadInternal</span>;</div>
<div class="tx" style="left:428px;top:612.95px;font-size:13.33px;color:#bcbec4;font-family:'Liberation Mono',monospace;transform:scaleY(1.14);transform-origin:0 13.55px;"><span style="color:#cf8e6d">    private </span>Button <span style="color:#c77dbb">btnSaveSQLite</span>;</div>
<div class="tx" style="left:428px;top:656.95px;font-size:13.33px;color:#bcbec4;font-family:'Liberation Mono',monospace;transform:scaleY(1.14);transform-origin:0 13.55px;"><span style="color:#cf8e6d">    private </span>Button <span style="color:#c77dbb">btnReadSQLite</span>;</div>
<svg style="left:1108px;top:88px;" width="16" height="14" viewBox="0 0 16 14"><path d="M2.2 7 C4.5 3.2 11.5 3.2 13.8 7 C11.5 10.8 4.5 10.8 2.2 7 Z" stroke="#ced0d6" stroke-width="1.2" fill="none" stroke-linecap="round"/><circle cx="8" cy="7" r="1.9" stroke="#ced0d6" stroke-width="1.2" fill="none" stroke-linecap="round"/><path d="M3 12 L13 2" stroke="#1e1f22" stroke-width="2.4"/><path d="M3 12 L13 2" stroke="#ced0d6" stroke-width="1.2" fill="none" stroke-linecap="round"/></svg>
<div class="a" style="left:1131px;top:86px;width:1px;height:18px;background:#43454a;"></div>
<svg style="left:1143px;top:88px;" width="14" height="13" viewBox="0 0 14 13"><path d="M7 1.6 L12.6 11.2 H1.4 Z" fill="#e0a552" stroke="#e0a552" stroke-width="1.6" stroke-linejoin="round"/><rect x="6.35" y="4.3" width="1.3" height="4" fill="#1e1f22"/><rect x="6.35" y="9.1" width="1.3" height="1.3" fill="#1e1f22"/></svg>
<svg style="left:1158px;top:89px;" width="14" height="12" viewBox="0 0 14 12"><path d="M1.8 3.5 L4.8 1.2 V11 M8 3.5 L11 1.2 V11" fill="none" stroke="#dfe1e5" stroke-width="1.3"/></svg>
<svg style="left:1181px;top:92px;" width="10" height="6" viewBox="0 0 10 6"><path d="M1 5 L5 1 L9 5" fill="none" stroke="#ced0d6" stroke-width="1.1"/></svg>
<svg style="left:1202px;top:92px;" width="10" height="6" viewBox="0 0 10 6"><path d="M1 1 L5 5 L9 1" fill="none" stroke="#ced0d6" stroke-width="1.1"/></svg>
<div class="a" style="left:429px;top:689px;width:717px;height:8px;background:#48494c;"></div>
<div class="a" style="left:1215px;top:82px;width:110px;height:616px;overflow:hidden">
<div class="a" style="left:0px;top:0px;width:110px;height:111px;background:#2c2d31;border-radius:0 0 6px 6px"></div>
<div class="a" style="left:0px;top:1px;width:7px;height:3px;background:#7f6150"></div><div class="a" style="left:8px;top:1px;width:28px;height:3px;background:#747579"></div><div class="a" style="left:0px;top:9px;width:6px;height:3px;background:#7f6150"></div><div class="a" style="left:7px;top:9px;width:3px;height:3px;background:#e3b56a"></div><div class="a" style="left:4px;top:29px;width:7px;height:3px;background:#7f6150"></div><div class="a" style="left:12px;top:29px;width:8px;height:3px;background:#747579"></div><div class="a" style="left:21px;top:29px;width:13px;height:3px;background:#7a5876"></div><div class="a" style="left:34px;top:29px;width:1px;height:3px;background:#747579"></div><div class="a" style="left:4px;top:37px;width:7px;height:3px;background:#7f6150"></div><div class="a" style="left:12px;top:37px;width:8px;height:3px;background:#747579"></div><div class="a" style="left:21px;top:37px;width:14px;height:3px;background:#7a5876"></div><div class="a" style="left:35px;top:37px;width:1px;height:3px;background:#747579"></div><div class="a" style="left:4px;top:45px;width:7px;height:3px;background:#7f6150"></div><div class="a" style="left:12px;top:45px;width:6px;height:3px;background:#747579"></div><div class="a" style="left:19px;top:45px;width:9px;height:3px;background:#7a5876"></div><div class="a" style="left:28px;top:45px;width:1px;height:3px;background:#76777c"></div><div class="a" style="left:4px;top:57px;width:7px;height:3px;background:#7f6150"></div><div class="a" style="left:12px;top:57px;width:6px;height:3px;background:#747579"></div><div class="a" style="left:19px;top:57px;width:18px;height:3px;background:#7a5876"></div><div class="a" style="left:37px;top:57px;width:1px;height:3px;background:#76777c"></div><div class="a" style="left:4px;top:65px;width:7px;height:3px;background:#7f6150"></div><div class="a" style="left:12px;top:65px;width:6px;height:3px;background:#747579"></div><div class="a" style="left:19px;top:65px;width:18px;height:3px;background:#7a5876"></div><div class="a" style="left:37px;top:65px;width:1px;height:3px;background:#76777c"></div><div class="a" style="left:4px;top:77px;width:7px;height:3px;background:#7f6150"></div><div class="a" style="left:12px;top:77px;width:6px;height:3px;background:#747579"></div><div class="a" style="left:19px;top:77px;width:15px;height:3px;background:#7a5876"></div><div class="a" style="left:34px;top:77px;width:1px;height:3px;background:#76777c"></div><div class="a" style="left:4px;top:85px;width:7px;height:3px;background:#7f6150"></div><div class="a" style="left:12px;top:85px;width:6px;height:3px;background:#747579"></div><div class="a" style="left:19px;top:85px;width:15px;height:3px;background:#7a5876"></div><div class="a" style="left:34px;top:85px;width:1px;height:3px;background:#76777c"></div><div class="a" style="left:4px;top:97px;width:7px;height:3px;background:#7f6150"></div><div class="a" style="left:12px;top:97px;width:6px;height:3px;background:#747579"></div><div class="a" style="left:19px;top:97px;width:13px;height:3px;background:#7a5876"></div><div class="a" style="left:32px;top:97px;width:1px;height:3px;background:#76777c"></div><div class="a" style="left:4px;top:105px;width:7px;height:3px;background:#7f6150"></div><div class="a" style="left:12px;top:105px;width:6px;height:3px;background:#747579"></div><div class="a" style="left:19px;top:105px;width:13px;height:3px;background:#7a5876"></div><div class="a" style="left:32px;top:105px;width:1px;height:3px;background:#76777c"></div><div class="a" style="left:4px;top:117px;width:7px;height:3px;background:#7f6150"></div><div class="a" style="left:12px;top:117px;width:6px;height:3px;background:#747579"></div><div class="a" style="left:19px;top:117px;width:13px;height:3px;background:#7a5876"></div><div class="a" style="left:32px;top:117px;width:1px;height:3px;background:#76777c"></div><div class="a" style="left:4px;top:125px;width:7px;height:3px;background:#7f6150"></div><div class="a" style="left:12px;top:125px;width:6px;height:3px;background:#747579"></div><div class="a" style="left:19px;top:125px;width:14px;height:3px;background:#7a5876"></div><div class="a" style="left:33px;top:125px;width:1px;height:3px;background:#76777c"></div><div class="a" style="left:4px;top:137px;width:7px;height:3px;background:#7f6150"></div><div class="a" style="left:12px;top:137px;width:14px;height:3px;background:#747579"></div><div class="a" style="left:27px;top:137px;width:14px;height:3px;background:#7a5876"></div><div class="a" style="left:41px;top:137px;width:1px;height:3px;background:#76777c"></div><div class="a" style="left:4px;top:149px;width:7px;height:3px;background:#7f6150"></div><div class="a" style="left:12px;top:149px;width:6px;height:3px;background:#7f6150"></div><div class="a" style="left:19px;top:149px;width:5px;height:3px;background:#7f6150"></div><div class="a" style="left:25px;top:149px;width:6px;height:3px;background:#747579"></div><div class="a" style="left:32px;top:149px;width:10px;height:3px;background:#7a5876"></div><div class="a" style="left:43px;top:149px;width:1px;height:3px;background:#76777c"></div><div class="a" style="left:45px;top:149px;width:14px;height:3px;background:#4a7050"></div><div class="a" style="left:59px;top:149px;width:1px;height:3px;background:#76777c"></div><div class="a" style="left:4px;top:157px;width:7px;height:3px;background:#7f6150"></div><div class="a" style="left:12px;top:157px;width:6px;height:3px;background:#7f6150"></div><div class="a" style="left:19px;top:157px;width:5px;height:3px;background:#7f6150"></div><div class="a" style="left:25px;top:157px;width:6px;height:3px;background:#747579"></div><div class="a" style="left:32px;top:157px;width:10px;height:3px;background:#7a5876"></div><div class="a" style="left:43px;top:157px;width:1px;height:3px;background:#76777c"></div><div class="a" style="left:45px;top:157px;width:9px;height:3px;background:#4a7050"></div><div class="a" style="left:54px;top:157px;width:1px;height:3px;background:#76777c"></div><div class="a" style="left:4px;top:165px;width:7px;height:3px;background:#7f6150"></div><div class="a" style="left:12px;top:165px;width:6px;height:3px;background:#7f6150"></div><div class="a" style="left:19px;top:165px;width:5px;height:3px;background:#7f6150"></div><div class="a" style="left:25px;top:165px;width:6px;height:3px;background:#747579"></div><div class="a" style="left:32px;top:165px;width:10px;height:3px;background:#7a5876"></div><div class="a" style="left:43px;top:165px;width:1px;height:3px;background:#76777c"></div><div class="a" style="left:46px;top:165px;width:10px;height:3px;background:#4a7050"></div><div class="a" style="left:56px;top:165px;width:1px;height:3px;background:#76777c"></div><div class="a" style="left:4px;top:177px;width:7px;height:3px;background:#7f6150"></div><div class="a" style="left:12px;top:177px;width:6px;height:3px;background:#7f6150"></div><div class="a" style="left:19px;top:177px;width:5px;height:3px;background:#7f6150"></div><div class="a" style="left:25px;top:177px;width:6px;height:3px;background:#747579"></div><div class="a" style="left:32px;top:177px;width:9px;height:3px;background:#7a5876"></div><div class="a" style="left:42px;top:177px;width:1px;height:3px;background:#76777c"></div><div class="a" style="left:44px;top:177px;width:19px;height:3px;background:#4a7050"></div><div class="a" style="left:63px;top:177px;width:1px;height:3px;background:#76777c"></div><div class="a" style="left:4px;top:185px;width:9px;height:3px;background:#73704a"></div><div class="a" style="left:4px;top:189px;width:9px;height:3px;background:#7f6150"></div><div class="a" style="left:14px;top:189px;width:4px;height:3px;background:#7f6150"></div><div class="a" style="left:19px;top:189px;width:7px;height:3px;background:#3f6d9a"></div><div class="a" style="left:26px;top:189px;width:8px;height:3px;background:#747579"></div><div class="a" style="left:35px;top:189px;width:19px;height:3px;background:#747579"></div><div class="a" style="left:55px;top:189px;width:1px;height:3px;background:#76777c"></div><div class="a" style="left:8px;top:193px;width:5px;height:3px;background:#7f6150"></div><div class="a" style="left:13px;top:193px;width:30px;height:3px;background:#747579"></div><div class="a" style="left:8px;top:197px;width:24px;height:3px;background:#747579"></div><div class="a" style="left:32px;top:197px;width:15px;height:3px;background:#7a5876"></div><div class="a" style="left:47px;top:197px;width:2px;height:3px;background:#747579"></div><div class="a" style="left:8px;top:205px;width:13px;height:3px;background:#7a5876"></div><div class="a" style="left:22px;top:205px;width:1px;height:3px;background:#76777c"></div><div class="a" style="left:24px;top:205px;width:18px;height:3px;background:#747579"></div><div class="a" style="left:42px;top:205px;width:16px;height:3px;background:#7a5876"></div><div class="a" style="left:58px;top:205px;width:2px;height:3px;background:#747579"></div><div class="a" style="left:8px;top:209px;width:14px;height:3px;background:#7a5876"></div><div class="a" style="left:23px;top:209px;width:1px;height:3px;background:#76777c"></div><div class="a" style="left:25px;top:209px;width:18px;height:3px;background:#747579"></div><div class="a" style="left:43px;top:209px;width:16px;height:3px;background:#7a5876"></div><div class="a" style="left:59px;top:209px;width:2px;height:3px;background:#747579"></div><div class="a" style="left:8px;top:213px;width:8px;height:3px;background:#7a5876"></div><div class="a" style="left:17px;top:213px;width:1px;height:3px;background:#76777c"></div><div class="a" style="left:19px;top:213px;width:18px;height:3px;background:#747579"></div><div class="a" style="left:37px;top:213px;width:9px;height:3px;background:#7a5876"></div><div class="a" style="left:46px;top:213px;width:2px;height:3px;background:#747579"></div><div class="a" style="left:8px;top:221px;width:18px;height:3px;background:#7a5876"></div><div class="a" style="left:27px;top:221px;width:1px;height:3px;background:#76777c"></div><div class="a" style="left:29px;top:221px;width:18px;height:3px;background:#747579"></div><div class="a" style="left:47px;top:221px;width:21px;height:3px;background:#7a5876"></div><div class="a" style="left:68px;top:221px;width:2px;height:3px;background:#747579"></div><div class="a" style="left:8px;top:225px;width:18px;height:3px;background:#7a5876"></div><div class="a" style="left:27px;top:225px;width:1px;height:3px;background:#76777c"></div><div class="a" style="left:29px;top:225px;width:18px;height:3px;background:#747579"></div><div class="a" style="left:47px;top:225px;width:21px;height:3px;background:#7a5876"></div><div class="a" style="left:68px;top:225px;width:2px;height:3px;background:#747579"></div><div class="a" style="left:8px;top:233px;width:15px;height:3px;background:#7a5876"></div><div class="a" style="left:24px;top:233px;width:1px;height:3px;background:#76777c"></div><div class="a" style="left:26px;top:233px;width:18px;height:3px;background:#747579"></div><div class="a" style="left:44px;top:233px;width:17px;height:3px;background:#7a5876"></div><div class="a" style="left:61px;top:233px;width:2px;height:3px;background:#747579"></div><div class="a" style="left:8px;top:237px;width:15px;height:3px;background:#7a5876"></div><div class="a" style="left:24px;top:237px;width:1px;height:3px;background:#76777c"></div><div class="a" style="left:26px;top:237px;width:18px;height:3px;background:#747579"></div><div class="a" style="left:44px;top:237px;width:17px;height:3px;background:#7a5876"></div><div class="a" style="left:61px;top:237px;width:2px;height:3px;background:#747579"></div><div class="a" style="left:8px;top:245px;width:13px;height:3px;background:#7a5876"></div><div class="a" style="left:22px;top:245px;width:1px;height:3px;background:#76777c"></div><div class="a" style="left:24px;top:245px;width:18px;height:3px;background:#747579"></div><div class="a" style="left:42px;top:245px;width:15px;height:3px;background:#7a5876"></div><div class="a" style="left:57px;top:245px;width:2px;height:3px;background:#747579"></div><div class="a" style="left:8px;top:249px;width:13px;height:3px;background:#7a5876"></div><div class="a" style="left:22px;top:249px;width:1px;height:3px;background:#76777c"></div><div class="a" style="left:24px;top:249px;width:18px;height:3px;background:#747579"></div><div class="a" style="left:42px;top:249px;width:15px;height:3px;background:#7a5876"></div><div class="a" style="left:57px;top:249px;width:2px;height:3px;background:#747579"></div><div class="a" style="left:8px;top:257px;width:14px;height:3px;background:#7a5876"></div><div class="a" style="left:23px;top:257px;width:1px;height:3px;background:#76777c"></div><div class="a" style="left:25px;top:257px;width:3px;height:3px;background:#7f6150"></div><div class="a" style="left:29px;top:257px;width:15px;height:3px;background:#747579"></div><div class="a" style="left:44px;top:257px;width:4px;height:3px;background:#7f6150"></div><div class="a" style="left:48px;top:257px;width:2px;height:3px;background:#747579"></div><div class="a" style="left:8px;top:265px;width:2px;height:3px;background:#7f6150"></div><div class="a" style="left:11px;top:265px;width:19px;height:3px;background:#747579"></div><div class="a" style="left:31px;top:265px;width:2px;height:3px;background:#76777c"></div><div class="a" style="left:34px;top:265px;width:5px;height:3px;background:#7f6150"></div><div class="a" style="left:40px;top:265px;width:1px;height:3px;background:#76777c"></div><div class="a" style="left:12px;top:269px;width:13px;height:3px;background:#7a5876"></div><div class="a" style="left:26px;top:269px;width:1px;height:3px;background:#76777c"></div><div class="a" style="left:28px;top:269px;width:29px;height:3px;background:#747579"></div><div class="a" style="left:57px;top:269px;width:14px;height:3px;background:#4a7050"></div><div class="a" style="left:71px;top:269px;width:2px;height:3px;background:#747579"></div><div class="a" style="left:12px;top:273px;width:14px;height:3px;background:#7a5876"></div><div class="a" style="left:27px;top:273px;width:1px;height:3px;background:#76777c"></div><div class="a" style="left:29px;top:273px;width:29px;height:3px;background:#747579"></div><div class="a" style="left:58px;top:273px;width:15px;height:3px;background:#4a7050"></div><div class="a" style="left:73px;top:273px;width:2px;height:3px;background:#747579"></div><div class="a" style="left:12px;top:277px;width:13px;height:3px;background:#7a5876"></div><div class="a" style="left:25px;top:277px;width:9px;height:3px;background:#747579"></div><div class="a" style="left:34px;top:277px;width:13px;height:3px;background:#7a5876"></div><div class="a" style="left:47px;top:277px;width:2px;height:3px;background:#747579"></div><div class="a" style="left:12px;top:281px;width:14px;height:3px;background:#7a5876"></div><div class="a" style="left:26px;top:281px;width:9px;height:3px;background:#747579"></div><div class="a" style="left:35px;top:281px;width:14px;height:3px;background:#7a5876"></div><div class="a" style="left:49px;top:281px;width:2px;height:3px;background:#747579"></div><div class="a" style="left:8px;top:285px;width:1px;height:3px;background:#76777c"></div><div class="a" style="left:10px;top:285px;width:4px;height:3px;background:#7f6150"></div><div class="a" style="left:15px;top:285px;width:1px;height:3px;background:#76777c"></div><div class="a" style="left:12px;top:289px;width:6px;height:3px;background:#747579"></div><div class="a" style="left:19px;top:289px;width:6px;height:3px;background:#747579"></div><div class="a" style="left:26px;top:289px;width:1px;height:3px;background:#76777c"></div><div class="a" style="left:28px;top:289px;width:12px;height:3px;background:#747579"></div><div class="a" style="left:12px;top:293px;width:2px;height:3px;background:#7f6150"></div><div class="a" style="left:15px;top:293px;width:7px;height:3px;background:#747579"></div><div class="a" style="left:23px;top:293px;width:2px;height:3px;background:#76777c"></div><div class="a" style="left:26px;top:293px;width:4px;height:3px;background:#7f6150"></div><div class="a" style="left:31px;top:293px;width:2px;height:3px;background:#76777c"></div><div class="a" style="left:16px;top:297px;width:13px;height:3px;background:#7a5876"></div><div class="a" style="left:30px;top:297px;width:1px;height:3px;background:#76777c"></div><div class="a" style="left:32px;top:297px;width:22px;height:3px;background:#747579"></div><div class="a" style="left:54px;top:297px;width:15px;height:3px;background:#4a7050"></div><div class="a" style="left:69px;top:297px;width:2px;height:3px;background:#747579"></div><div class="a" style="left:16px;top:301px;width:14px;height:3px;background:#7a5876"></div><div class="a" style="left:31px;top:301px;width:1px;height:3px;background:#76777c"></div><div class="a" style="left:33px;top:301px;width:22px;height:3px;background:#747579"></div><div class="a" style="left:55px;top:301px;width:9px;height:3px;background:#4a7050"></div><div class="a" style="left:64px;top:301px;width:2px;height:3px;background:#747579"></div><div class="a" style="left:16px;top:309px;width:13px;height:3px;background:#7a5876"></div><div class="a" style="left:29px;top:309px;width:9px;height:3px;background:#747579"></div><div class="a" style="left:38px;top:309px;width:13px;height:3px;background:#7a5876"></div><div class="a" style="left:51px;top:309px;width:2px;height:3px;background:#747579"></div><div class="a" style="left:16px;top:313px;width:14px;height:3px;background:#7a5876"></div><div class="a" style="left:30px;top:313px;width:9px;height:3px;background:#747579"></div><div class="a" style="left:39px;top:313px;width:14px;height:3px;background:#7a5876"></div><div class="a" style="left:53px;top:313px;width:2px;height:3px;background:#747579"></div><div class="a" style="left:12px;top:317px;width:1px;height:3px;background:#76777c"></div><div class="a" style="left:8px;top:321px;width:1px;height:3px;background:#76777c"></div><div class="a" style="left:8px;top:329px;width:23px;height:3px;background:#747579"></div><div class="a" style="left:4px;top:333px;width:1px;height:3px;background:#76777c"></div><div class="a" style="left:4px;top:341px;width:9px;height:3px;background:#73704a"></div><div class="a" style="left:4px;top:345px;width:9px;height:3px;background:#7f6150"></div><div class="a" style="left:14px;top:345px;width:4px;height:3px;background:#7f6150"></div><div class="a" style="left:19px;top:345px;width:19px;height:3px;background:#3f6d9a"></div><div class="a" style="left:38px;top:345px;width:7px;height:3px;background:#747579"></div><div class="a" style="left:46px;top:345px;width:15px;height:3px;background:#e3b56a"></div><div class="a" style="left:8px;top:349px;width:5px;height:3px;background:#7f6150"></div><div class="a" style="left:13px;top:349px;width:31px;height:3px;background:#747579"></div><div class="a" style="left:8px;top:353px;width:19px;height:3px;background:#747579"></div><div class="a" style="left:27px;top:353px;width:14px;height:3px;background:#4a7050"></div><div class="a" style="left:42px;top:353px;width:1px;height:3px;background:#76777c"></div><div class="a" style="left:43px;top:353px;width:13px;height:3px;background:#7a5876"></div><div class="a" style="left:56px;top:353px;width:23px;height:3px;background:#747579"></div><div class="a" style="left:8px;top:357px;width:19px;height:3px;background:#747579"></div><div class="a" style="left:27px;top:357px;width:15px;height:3px;background:#4a7050"></div><div class="a" style="left:43px;top:357px;width:1px;height:3px;background:#76777c"></div><div class="a" style="left:44px;top:357px;width:14px;height:3px;background:#7a5876"></div><div class="a" style="left:58px;top:357px;width:23px;height:3px;background:#747579"></div><div class="a" style="left:4px;top:361px;width:1px;height:3px;background:#76777c"></div><div class="a" style="left:4px;top:373px;width:7px;height:3px;background:#7f6150"></div><div class="a" style="left:12px;top:373px;width:4px;height:3px;background:#7f6150"></div><div class="a" style="left:17px;top:373px;width:20px;height:3px;background:#3f6d9a"></div><div class="a" style="left:37px;top:373px;width:2px;height:3px;background:#747579"></div><div class="a" style="left:40px;top:373px;width:1px;height:3px;background:#76777c"></div><div class="a" style="left:4px;top:569px;width:1px;height:3px;background:#76777c"></div><div class="a" style="left:4px;top:581px;width:7px;height:3px;background:#7f6150"></div><div class="a" style="left:12px;top:581px;width:4px;height:3px;background:#7f6150"></div><div class="a" style="left:17px;top:581px;width:23px;height:3px;background:#3f6d9a"></div><div class="a" style="left:40px;top:581px;width:2px;height:3px;background:#747579"></div><div class="a" style="left:43px;top:581px;width:1px;height:3px;background:#76777c"></div><div class="a" style="left:8px;top:585px;width:13px;height:3px;background:#7a5876"></div><div class="a" style="left:22px;top:585px;width:1px;height:3px;background:#76777c"></div><div class="a" style="left:24px;top:585px;width:13px;height:3px;background:#7a5876"></div><div class="a" style="left:37px;top:585px;width:22px;height:3px;background:#747579"></div><div class="a" style="left:8px;top:589px;width:14px;height:3px;background:#7a5876"></div><div class="a" style="left:23px;top:589px;width:1px;height:3px;background:#76777c"></div><div class="a" style="left:25px;top:589px;width:14px;height:3px;background:#7a5876"></div><div class="a" style="left:39px;top:589px;width:22px;height:3px;background:#747579"></div><div class="a" style="left:8px;top:597px;width:17px;height:3px;background:#747579"></div><div class="a" style="left:26px;top:597px;width:17px;height:3px;background:#747579"></div><div class="a" style="left:44px;top:597px;width:1px;height:3px;background:#76777c"></div><div class="a" style="left:46px;top:597px;width:21px;height:3px;background:#747579"></div><div class="a" style="left:67px;top:597px;width:11px;height:3px;background:#7a5876"></div><div class="a" style="left:79px;top:597px;width:8px;height:3px;background:#747579"></div><div class="a" style="left:87px;top:597px;width:13px;height:3px;background:#7a5876"></div><div class="a" style="left:100px;top:597px;width:1px;height:3px;background:#747579"></div><div class="a" style="left:8px;top:601px;width:24px;height:3px;background:#747579"></div><div class="a" style="left:33px;top:601px;width:6px;height:3px;background:#747579"></div><div class="a" style="left:40px;top:601px;width:1px;height:3px;background:#76777c"></div><div class="a" style="left:42px;top:601px;width:25px;height:3px;background:#747579"></div><div class="a" style="left:8px;top:605px;width:17px;height:3px;background:#747579"></div><div class="a" style="left:25px;top:605px;width:11px;height:3px;background:#7a5876"></div><div class="a" style="left:36px;top:605px;width:1px;height:3px;background:#76777c"></div><div class="a" style="left:37px;top:605px;width:13px;height:3px;background:#7a5876"></div><div class="a" style="left:50px;top:605px;width:2px;height:3px;background:#747579"></div><div class="a" style="left:8px;top:609px;width:17px;height:3px;background:#747579"></div><div class="a" style="left:25px;top:609px;width:12px;height:3px;background:#7a5876"></div><div class="a" style="left:37px;top:609px;width:1px;height:3px;background:#76777c"></div><div class="a" style="left:38px;top:609px;width:14px;height:3px;background:#7a5876"></div><div class="a" style="left:52px;top:609px;width:2px;height:3px;background:#747579"></div><div class="a" style="left:8px;top:613px;width:15px;height:3px;background:#747579"></div><div class="a" style="left:8px;top:377px;width:18px;height:3px;background:#7a5876"></div><div class="a" style="left:26px;top:377px;width:20px;height:3px;background:#747579"></div><div class="a" style="left:46px;top:377px;width:3px;height:3px;background:#5a5c60"></div><div class="a" style="left:50px;top:377px;width:22px;height:3px;background:#4e5054"></div><div class="a" style="left:73px;top:377px;width:1px;height:3px;background:#76777c"></div><div class="a" style="left:12px;top:381px;width:9px;height:3px;background:#73704a"></div><div class="a" style="left:12px;top:385px;width:6px;height:3px;background:#7f6150"></div><div class="a" style="left:19px;top:385px;width:4px;height:3px;background:#7f6150"></div><div class="a" style="left:24px;top:385px;width:7px;height:3px;background:#3f6d9a"></div><div class="a" style="left:31px;top:385px;width:5px;height:3px;background:#747579"></div><div class="a" style="left:37px;top:385px;width:2px;height:3px;background:#76777c"></div><div class="a" style="left:40px;top:385px;width:1px;height:3px;background:#76777c"></div><div class="a" style="left:16px;top:389px;width:28px;height:3px;background:#747579"></div><div class="a" style="left:12px;top:393px;width:1px;height:3px;background:#76777c"></div><div class="a" style="left:8px;top:397px;width:3px;height:3px;background:#747579"></div><div class="a" style="left:8px;top:405px;width:18px;height:3px;background:#7a5876"></div><div class="a" style="left:26px;top:405px;width:20px;height:3px;background:#747579"></div><div class="a" style="left:46px;top:405px;width:3px;height:3px;background:#5a5c60"></div><div class="a" style="left:50px;top:405px;width:22px;height:3px;background:#4e5054"></div><div class="a" style="left:73px;top:405px;width:1px;height:3px;background:#76777c"></div><div class="a" style="left:12px;top:409px;width:9px;height:3px;background:#73704a"></div><div class="a" style="left:12px;top:413px;width:6px;height:3px;background:#7f6150"></div><div class="a" style="left:19px;top:413px;width:4px;height:3px;background:#7f6150"></div><div class="a" style="left:24px;top:413px;width:7px;height:3px;background:#3f6d9a"></div><div class="a" style="left:31px;top:413px;width:5px;height:3px;background:#747579"></div><div class="a" style="left:37px;top:413px;width:2px;height:3px;background:#76777c"></div><div class="a" style="left:40px;top:413px;width:1px;height:3px;background:#76777c"></div><div class="a" style="left:16px;top:417px;width:30px;height:3px;background:#747579"></div><div class="a" style="left:12px;top:421px;width:1px;height:3px;background:#76777c"></div><div class="a" style="left:8px;top:425px;width:3px;height:3px;background:#747579"></div><div class="a" style="left:8px;top:433px;width:15px;height:3px;background:#7a5876"></div><div class="a" style="left:23px;top:433px;width:20px;height:3px;background:#747579"></div><div class="a" style="left:43px;top:433px;width:3px;height:3px;background:#5a5c60"></div><div class="a" style="left:47px;top:433px;width:22px;height:3px;background:#4e5054"></div><div class="a" style="left:70px;top:433px;width:1px;height:3px;background:#76777c"></div><div class="a" style="left:12px;top:437px;width:9px;height:3px;background:#73704a"></div><div class="a" style="left:12px;top:441px;width:6px;height:3px;background:#7f6150"></div><div class="a" style="left:19px;top:441px;width:4px;height:3px;background:#7f6150"></div><div class="a" style="left:24px;top:441px;width:7px;height:3px;background:#3f6d9a"></div><div class="a" style="left:31px;top:441px;width:5px;height:3px;background:#747579"></div><div class="a" style="left:37px;top:441px;width:2px;height:3px;background:#76777c"></div><div class="a" style="left:40px;top:441px;width:1px;height:3px;background:#76777c"></div><div class="a" style="left:16px;top:445px;width:23px;height:3px;background:#747579"></div><div class="a" style="left:12px;top:449px;width:1px;height:3px;background:#76777c"></div><div class="a" style="left:8px;top:453px;width:3px;height:3px;background:#747579"></div><div class="a" style="left:8px;top:461px;width:15px;height:3px;background:#7a5876"></div><div class="a" style="left:23px;top:461px;width:20px;height:3px;background:#747579"></div><div class="a" style="left:43px;top:461px;width:3px;height:3px;background:#5a5c60"></div><div class="a" style="left:47px;top:461px;width:22px;height:3px;background:#4e5054"></div><div class="a" style="left:70px;top:461px;width:1px;height:3px;background:#76777c"></div><div class="a" style="left:12px;top:465px;width:9px;height:3px;background:#73704a"></div><div class="a" style="left:12px;top:469px;width:6px;height:3px;background:#7f6150"></div><div class="a" style="left:19px;top:469px;width:4px;height:3px;background:#7f6150"></div><div class="a" style="left:24px;top:469px;width:7px;height:3px;background:#3f6d9a"></div><div class="a" style="left:31px;top:469px;width:5px;height:3px;background:#747579"></div><div class="a" style="left:37px;top:469px;width:2px;height:3px;background:#76777c"></div><div class="a" style="left:40px;top:469px;width:1px;height:3px;background:#76777c"></div><div class="a" style="left:16px;top:473px;width:25px;height:3px;background:#747579"></div><div class="a" style="left:12px;top:477px;width:1px;height:3px;background:#76777c"></div><div class="a" style="left:8px;top:481px;width:3px;height:3px;background:#747579"></div><div class="a" style="left:8px;top:489px;width:13px;height:3px;background:#7a5876"></div><div class="a" style="left:21px;top:489px;width:20px;height:3px;background:#747579"></div><div class="a" style="left:41px;top:489px;width:3px;height:3px;background:#5a5c60"></div><div class="a" style="left:45px;top:489px;width:22px;height:3px;background:#4e5054"></div><div class="a" style="left:68px;top:489px;width:1px;height:3px;background:#76777c"></div><div class="a" style="left:12px;top:493px;width:9px;height:3px;background:#73704a"></div><div class="a" style="left:12px;top:497px;width:6px;height:3px;background:#7f6150"></div><div class="a" style="left:19px;top:497px;width:4px;height:3px;background:#7f6150"></div><div class="a" style="left:24px;top:497px;width:7px;height:3px;background:#3f6d9a"></div><div class="a" style="left:31px;top:497px;width:5px;height:3px;background:#747579"></div><div class="a" style="left:37px;top:497px;width:2px;height:3px;background:#76777c"></div><div class="a" style="left:40px;top:497px;width:1px;height:3px;background:#76777c"></div><div class="a" style="left:16px;top:501px;width:15px;height:3px;background:#747579"></div><div class="a" style="left:12px;top:505px;width:1px;height:3px;background:#76777c"></div><div class="a" style="left:8px;top:509px;width:3px;height:3px;background:#747579"></div><div class="a" style="left:8px;top:517px;width:13px;height:3px;background:#7a5876"></div><div class="a" style="left:21px;top:517px;width:20px;height:3px;background:#747579"></div><div class="a" style="left:41px;top:517px;width:3px;height:3px;background:#5a5c60"></div><div class="a" style="left:45px;top:517px;width:22px;height:3px;background:#4e5054"></div><div class="a" style="left:68px;top:517px;width:1px;height:3px;background:#76777c"></div><div class="a" style="left:12px;top:521px;width:9px;height:3px;background:#73704a"></div><div class="a" style="left:12px;top:525px;width:6px;height:3px;background:#7f6150"></div><div class="a" style="left:19px;top:525px;width:4px;height:3px;background:#7f6150"></div><div class="a" style="left:24px;top:525px;width:7px;height:3px;background:#3f6d9a"></div><div class="a" style="left:31px;top:525px;width:5px;height:3px;background:#747579"></div><div class="a" style="left:37px;top:525px;width:2px;height:3px;background:#76777c"></div><div class="a" style="left:40px;top:525px;width:1px;height:3px;background:#76777c"></div><div class="a" style="left:16px;top:529px;width:17px;height:3px;background:#747579"></div><div class="a" style="left:12px;top:533px;width:1px;height:3px;background:#76777c"></div><div class="a" style="left:8px;top:537px;width:3px;height:3px;background:#747579"></div><div class="a" style="left:8px;top:545px;width:8px;height:3px;background:#7a5876"></div><div class="a" style="left:16px;top:545px;width:20px;height:3px;background:#747579"></div><div class="a" style="left:36px;top:545px;width:3px;height:3px;background:#5a5c60"></div><div class="a" style="left:40px;top:545px;width:22px;height:3px;background:#4e5054"></div><div class="a" style="left:63px;top:545px;width:1px;height:3px;background:#76777c"></div><div class="a" style="left:12px;top:549px;width:9px;height:3px;background:#73704a"></div><div class="a" style="left:12px;top:553px;width:6px;height:3px;background:#7f6150"></div><div class="a" style="left:19px;top:553px;width:4px;height:3px;background:#7f6150"></div><div class="a" style="left:24px;top:553px;width:7px;height:3px;background:#3f6d9a"></div><div class="a" style="left:31px;top:553px;width:5px;height:3px;background:#747579"></div><div class="a" style="left:37px;top:553px;width:2px;height:3px;background:#76777c"></div><div class="a" style="left:40px;top:553px;width:1px;height:3px;background:#76777c"></div><div class="a" style="left:16px;top:557px;width:9px;height:3px;background:#747579"></div><div class="a" style="left:12px;top:561px;width:1px;height:3px;background:#76777c"></div><div class="a" style="left:8px;top:565px;width:3px;height:3px;background:#747579"></div>
<div class="a" style="left:0px;top:48px;width:110px;height:4px;background:#35548f;"></div>
<div class="tx" style="left:2.5px;top:14.6px;font-family:'Liberation Mono',monospace;font-size:8.3px;line-height:12px;color:#5fb865;font-weight:bold;transform:scaleY(1.25);transform-origin:0 0">SecondActivity</div>
</div>
<div class="a" style="left:1205px;top:108px;width:9px;height:64px;background:#3a3c40;"></div>
<div class="a" style="left:1205px;top:112px;width:10px;height:2px;background:#e0a552;"></div>
<div class="a" style="left:1205px;top:117px;width:10px;height:2px;background:#5fb865;"></div>
<div class="a" style="left:1205px;top:307px;width:10px;height:2px;background:#e0a552;"></div>
<div class="a" style="left:1205px;top:547px;width:10px;height:2px;background:#e0a552;"></div>
<div class="a" style="left:1205px;top:607px;width:10px;height:2px;background:#e0a552;"></div>
<div class="a" style="left:1325px;top:41px;width:1px;height:658px;background:#1e1f22;"></div>
<div class="a" style="left:1326px;top:41px;width:40px;height:658px;background:#2b2d30;"></div>
<svg style="left:1336px;top:51px;" width="20" height="20" viewBox="0 0 20 20"><path d="M3.5 15 C4.5 13.5 4.5 11 4.5 9 A5.5 5.5 0 0 1 15.5 9 C15.5 11 15.5 13.5 16.5 15 Z" stroke="#ced0d6" stroke-width="1.2" fill="none" stroke-linecap="round" stroke-linejoin="round"/><path d="M8.5 17.5 H11.5" stroke="#ced0d6" stroke-width="1.2" fill="none" stroke-linecap="round" stroke-linejoin="round" stroke-width="1.6"/></svg>
<svg style="left:1335px;top:91px;" width="24" height="20" viewBox="0 0 24 20"><path d="M2.5 16.5 C1 13 2.5 7.5 7.5 5.5 C11 4 15 4.5 17.5 6.5 C18.5 4.5 20.5 3.5 21 5.5 C21.5 7.5 20 9.5 18.5 9 M17.5 6.5 C18.5 9.5 18 12.5 16.5 14 M2.5 16.5 C4 15 5.5 15.5 6.5 17 C7.5 15.5 9.5 15.5 10.5 16.5 C11.5 15.5 13.5 15.5 14.5 17" stroke="#ced0d6" stroke-width="1.2" fill="none" stroke-linecap="round" stroke-linejoin="round"/><path d="M8.5 9.5 C9.5 11 11 11.5 12 11" stroke="#ced0d6" stroke-width="1.2" fill="none" stroke-linecap="round" stroke-linejoin="round"/><circle cx="14.5" cy="8.8" r="0.7" fill="#ced0d6"/></svg>
<svg style="left:1335px;top:131px;" width="22" height="21" viewBox="0 0 22 21"><path d="M8 18.3 H4.3 A1.4 1.4 0 0 1 2.9 16.9 V3.7 A1.4 1.4 0 0 1 4.3 2.3 H10.4 A1.4 1.4 0 0 1 11.8 3.7 V8.5" stroke="#ced0d6" stroke-width="1.2" fill="none" stroke-linecap="round" stroke-linejoin="round"/><path d="M6.5 4.8 V6.3" stroke="#ced0d6" stroke-width="1.2" fill="none" stroke-linecap="round" stroke-linejoin="round"/><path d="M8.4 18.6 A5.8 5.2 0 0 1 20 18.6 Z" stroke="#ced0d6" stroke-width="1.2" fill="none" stroke-linecap="round" stroke-linejoin="round"/><path d="M10.5 11.5 L11.8 13.5 M18 11.5 L16.6 13.5" stroke="#ced0d6" stroke-width="1.2" fill="none" stroke-linecap="round" stroke-linejoin="round"/></svg>
<svg style="left:1335px;top:171px;" width="22" height="20" viewBox="0 0 22 20"><path d="M7 17.5 H4.3 A1.4 1.4 0 0 1 2.9 16.1 V3.7 A1.4 1.4 0 0 1 4.3 2.3 H10.4 A1.4 1.4 0 0 1 11.8 3.7 V8.5" stroke="#ced0d6" stroke-width="1.2" fill="none" stroke-linecap="round" stroke-linejoin="round"/><path d="M6.5 4.8 V6.3" stroke="#ced0d6" stroke-width="1.2" fill="none" stroke-linecap="round" stroke-linejoin="round"/><rect x="8.2" y="9.8" width="10.6" height="6" rx="0.8" stroke="#ced0d6" stroke-width="1.2" fill="none" stroke-linecap="round" stroke-linejoin="round"/><path d="M7.5 18.3 H19" stroke="#ced0d6" stroke-width="1.2" fill="none" stroke-linecap="round" stroke-linejoin="round"/></svg>
<svg style="left:1335px;top:211px;" width="22" height="20" viewBox="0 0 22 20"><path d="M8 6 V3.5 A1.5 1.5 0 0 1 9.5 2 H17.5 A1.5 1.5 0 0 1 19 3.5 V10 A1.5 1.5 0 0 1 17.5 11.5 H17" stroke="#ced0d6" stroke-width="1.2" fill="none" stroke-linecap="round" stroke-linejoin="round"/><path d="M11 6 H4 A1.5 1.5 0 0 0 2.5 7.5 V18 L5.5 15.5 H9" stroke="#ced0d6" stroke-width="1.2" fill="none" stroke-linecap="round" stroke-linejoin="round"/><path d="M15 10 Q15.5 14 19.5 14.5 Q15.5 15 15 19 Q14.5 15 10.5 14.5 Q14.5 14 15 10 Z" fill="#ced0d6"/></svg>
<svg style="left:1335px;top:251px;" width="22" height="20" viewBox="0 0 22 20"><path d="M9 6.5 H5.5 A3.5 3.5 0 0 0 5.5 13.5 H9 M13 6.5 H16.5 A3.5 3.5 0 0 1 19.5 9" stroke="#ced0d6" stroke-width="1.2" fill="none" stroke-linecap="round" stroke-linejoin="round"/><path d="M7 10 H15" stroke="#ced0d6" stroke-width="1.2" fill="none" stroke-linecap="round" stroke-linejoin="round"/><path d="M18.5 12.5 L15.5 15.5 L18.5 18.5" stroke="#548af7" stroke-width="1.2" fill="none" stroke-linecap="round" stroke-linejoin="round"/></svg>
<svg style="left:1335px;top:291px;" width="22" height="20" viewBox="0 0 22 20"><path d="M3 3 L13 13 M5 1.5 L1.5 5 M16.5 2.5 L14 5 L15.5 6.5 L18 4 A3.5 3.5 0 0 1 13.5 8.5 L4.5 17.5 A1.2 1.2 0 0 1 2.5 15.5 L11.5 6.5 A3.5 3.5 0 0 1 16.5 2.5" stroke="#ced0d6" stroke-width="1.2" fill="none" stroke-linecap="round" stroke-linejoin="round"/><path d="M19.5 13 L16 16.5 L19.5 19.5" stroke="#548af7" stroke-width="1.2" fill="none" stroke-linecap="round" stroke-linejoin="round"/></svg>
<svg style="left:1335px;top:331px;" width="22" height="20" viewBox="0 0 22 20"><path d="M3 3.5 H8 A2 2 0 0 1 12 3.5 H16.5 V8 A2 2 0 0 1 16.5 12 M3 3.5 V17.5 H12" stroke="#ced0d6" stroke-width="1.2" fill="none" stroke-linecap="round" stroke-linejoin="round"/><path d="M6 13 L11 8 M9.5 7 A2 2 0 0 0 12 9.5" stroke="#ced0d6" stroke-width="1.2" fill="none" stroke-linecap="round" stroke-linejoin="round"/><path d="M19.5 13 L16 16.5 L19.5 19.5" stroke="#548af7" stroke-width="1.2" fill="none" stroke-linecap="round" stroke-linejoin="round"/></svg>
<svg style="left:1335px;top:371px;" width="22" height="20" viewBox="0 0 22 20"><path d="M3 18 L3.5 14.5 L14 4 L17 7 L6.5 17.5 Z M12.5 5.5 L15.5 8.5" stroke="#ced0d6" stroke-width="1.2" fill="none" stroke-linecap="round" stroke-linejoin="round"/><path d="M19.5 13 L16 16.5 L19.5 19.5" stroke="#548af7" stroke-width="1.2" fill="none" stroke-linecap="round" stroke-linejoin="round"/></svg>
<svg style="left:1335px;top:411px;" width="22" height="20" viewBox="0 0 22 20"><rect x="2.5" y="2" width="16" height="16" rx="2" stroke="#ced0d6" stroke-width="1.2" fill="none" stroke-linecap="round" stroke-linejoin="round"/><path d="M2.5 6 H18.5" stroke="#ced0d6" stroke-width="1.2" fill="none" stroke-linecap="round" stroke-linejoin="round"/><path d="M5 11.5 C7 8.5 12 8.5 14 11.5 C12 14.5 7 14.5 5 11.5 Z" stroke="#ced0d6" stroke-width="1.2" fill="none" stroke-linecap="round" stroke-linejoin="round"/><circle cx="9.5" cy="11.5" r="1" fill="#ced0d6"/><path d="M20 14 L17 17 L20 20" stroke="#548af7" stroke-width="1.2" fill="none" stroke-linecap="round" stroke-linejoin="round"/></svg>
<div class="a" style="left:0px;top:698px;width:1366px;height:1px;background:#1e1f22;"></div>
<div class="a" style="left:0px;top:699px;width:1366px;height:29px;background:#2b2d30;"></div>
<svg style="left:13px;top:708px;" width="10" height="10" viewBox="0 0 10 10"><rect x="1" y="1" width="7.5" height="7.5" rx="1.5" fill="#25324d" stroke="#548af7" stroke-width="1.1"/></svg>
<div class="tx" style="left:26px;top:703.12px;font-size:13.5px;color:#a8abb0;font-family:'Liberation Sans',sans-serif;">DataStorage</div>
<svg style="left:111px;top:708px;" width="7" height="10" viewBox="0 0 7 10"><path d="M1 1 L5 5 L1 9" fill="none" stroke="#a8abb0" stroke-width="1.1"/></svg>
<svg style="left:126px;top:708px;" width="10" height="10" viewBox="0 0 10 10"><rect x="1" y="1" width="7.5" height="7.5" rx="1.5" fill="#25324d" stroke="#548af7" stroke-width="1.1"/></svg>
<div class="tx" style="left:139.5px;top:703.12px;font-size:13.5px;color:#a8abb0;font-family:'Liberation Sans',sans-serif;">app</div>
<svg style="left:171px;top:708px;" width="7" height="10" viewBox="0 0 7 10"><path d="M1 1 L5 5 L1 9" fill="none" stroke="#a8abb0" stroke-width="1.1"/></svg>
<div class="tx" style="left:186.5px;top:703.12px;font-size:13.5px;color:#a8abb0;font-family:'Liberation Sans',sans-serif;">src</div>
<svg style="left:214px;top:708px;" width="7" height="10" viewBox="0 0 7 10"><path d="M1 1 L5 5 L1 9" fill="none" stroke="#a8abb0" stroke-width="1.1"/></svg>
<svg style="left:228px;top:708px;" width="10" height="10" viewBox="0 0 10 10"><rect x="1" y="1" width="7.5" height="7.5" rx="1.5" fill="#25324d" stroke="#548af7" stroke-width="1.1"/></svg>
<div class="tx" style="left:241.5px;top:703.12px;font-size:13.5px;color:#a8abb0;font-family:'Liberation Sans',sans-serif;">main</div>
<svg style="left:279px;top:708px;" width="7" height="10" viewBox="0 0 7 10"><path d="M1 1 L5 5 L1 9" fill="none" stroke="#a8abb0" stroke-width="1.1"/></svg>
<div class="tx" style="left:293.5px;top:703.12px;font-size:13.5px;color:#a8abb0;font-family:'Liberation Sans',sans-serif;">java</div>
<svg style="left:326.5px;top:708px;" width="7" height="10" viewBox="0 0 7 10"><path d="M1 1 L5 5 L1 9" fill="none" stroke="#a8abb0" stroke-width="1.1"/></svg>
<div class="tx" style="left:342px;top:703.12px;font-size:13.5px;color:#a8abb0;font-family:'Liberation Sans',sans-serif;">com</div>
<svg style="left:376.5px;top:708px;" width="7" height="10" viewBox="0 0 7 10"><path d="M1 1 L5 5 L1 9" fill="none" stroke="#a8abb0" stroke-width="1.1"/></svg>
<div class="tx" style="left:392px;top:703.12px;font-size:13.5px;color:#a8abb0;font-family:'Liberation Sans',sans-serif;">example</div>
<svg style="left:453px;top:708px;" width="7" height="10" viewBox="0 0 7 10"><path d="M1 1 L5 5 L1 9" fill="none" stroke="#a8abb0" stroke-width="1.1"/></svg>
<div class="tx" style="left:468.5px;top:703.12px;font-size:13.5px;color:#a8abb0;font-family:'Liberation Sans',sans-serif;">messagetomobile</div>
<svg style="left:587px;top:708px;" width="7" height="10" viewBox="0 0 7 10"><path d="M1 1 L5 5 L1 9" fill="none" stroke="#a8abb0" stroke-width="1.1"/></svg>
<svg style="left:602px;top:705px;" width="16" height="16" viewBox="0 0 16 16"><circle cx="8" cy="8" r="6.5" fill="#25324d" stroke="#548af7" stroke-width="1.1"/><path d="M10.3 6 A2.9 2.9 0 1 0 10.3 10" fill="none" stroke="#548af7" stroke-width="1.1"/></svg>
<div class="tx" style="left:623px;top:703.12px;font-size:13.5px;color:#a8abb0;font-family:'Liberation Sans',sans-serif;">SecondActivity</div>
<div class="tx" style="left:1062px;top:703.12px;font-size:13.5px;color:#a8abb0;font-family:'Liberation Sans',sans-serif;">25:1</div>
<div class="tx" style="left:1104.5px;top:703.54px;font-size:12.3px;color:#a8abb0;font-family:'Liberation Sans',sans-serif;">CRLF</div>
<div class="tx" style="left:1152.5px;top:703.12px;font-size:13.5px;color:#a8abb0;font-family:'Liberation Sans',sans-serif;">UTF-8</div>
<svg style="left:1208px;top:705px;" width="16" height="16" viewBox="0 0 16 16"><path d="M1.5 4 H9 M1.5 8 H7 M1.5 12 H9 M4 14.5 L13 3.5" stroke="#a8abb0" stroke-width="1.1" fill="none" stroke-linecap="round"/><path d="M12 1 V6 M9.5 3.5 H14.5" stroke="#a8abb0" stroke-width="1.1" fill="none" stroke-linecap="round"/></svg>
<svg style="left:1241px;top:704px;" width="16" height="18" viewBox="0 0 16 18"><path d="M9 16 H3 A1.5 1.5 0 0 1 1.5 14.5 V3 A1.5 1.5 0 0 1 3 1.5 H8 L11.5 5 V8" stroke="#a8abb0" stroke-width="1.1" fill="none" stroke-linecap="round"/><circle cx="11.5" cy="13" r="2.6" stroke="#a8abb0" stroke-width="1.1" fill="none" stroke-linecap="round"/><path d="M11.5 9.2 V10 M11.5 16 V16.8 M7.7 13 H8.5 M14.5 13 H15.3" stroke="#a8abb0" stroke-width="1.1" fill="none" stroke-linecap="round"/></svg>
<div class="tx" style="left:1261px;top:702.98px;font-size:13.9px;color:#a8abb0;font-family:'Liberation Sans',sans-serif;">4 spaces</div>
<svg style="left:1333px;top:704px;" width="17" height="17" viewBox="0 0 17 17"><rect x="1.5" y="8" width="10" height="7.5" rx="1.5" stroke="#a8abb0" stroke-width="1.1" fill="none" stroke-linecap="round"/><path d="M9 8 V5 A3 3 0 0 1 15 5 V6" stroke="#a8abb0" stroke-width="1.1" fill="none" stroke-linecap="round"/><circle cx="6.5" cy="11.8" r="0.9" fill="#a8abb0"/></svg>
<div class="a" style="left:0px;top:728px;width:1366px;height:40px;background:#1c2a2f;"></div>
<svg style="left:15px;top:739px;" width="18" height="18" viewBox="0 0 18 18"><path d="M0.8 2.6 L7.2 1.7 V8.2 H0.8 Z M8.2 1.55 L17 0.3 V8.2 H8.2 Z M0.8 9.2 H7.2 V15.7 L0.8 14.8 Z M8.2 9.2 H17 V17 L8.2 15.85 Z" fill="#ffffff"/></svg>
<div class="a" style="left:48px;top:728px;width:288px;height:40px;background:#f0f0f0;"></div>
<svg style="left:58px;top:739px;" width="20" height="18" viewBox="0 0 20 18"><circle cx="12.5" cy="6" r="4.8" fill="none" stroke="#1a1a1a" stroke-width="1.4"/><path d="M9 9.5 L1.5 17" stroke="#1a1a1a" stroke-width="1.5"/></svg>
<div class="tx" style="left:88.5px;top:739.21px;font-size:14.4px;color:#1a1a1a;font-family:'Liberation Sans',sans-serif;">Type here to search</div>
<svg style="left:260px;top:730px;" width="70" height="35" viewBox="0 0 70 35"><path d="M28 5.5 Q30.16 15.34 40 17.5 Q30.16 19.66 28 29.5 Q25.84 19.66 16 17.5 Q25.84 15.34 28 5.5 Z" fill="#f7be2a"/><path d="M50 15.0 Q50.99 19.51 55.5 20.5 Q50.99 21.49 50 26.0 Q49.01 21.49 44.5 20.5 Q49.01 19.51 50 15.0 Z" fill="#f7be2a"/><path d="M9 21.3 Q9.756 24.744 13.2 25.5 Q9.756 26.256 9 29.7 Q8.244 26.256 4.8 25.5 Q8.244 24.744 9 21.3 Z" fill="#2d9be8"/><circle cx="44.5" cy="8" r="1.6" fill="#d9542b"/><circle cx="63" cy="27.5" r="1.5" fill="#7bb533"/></svg>
<svg style="left:340px;top:735px;" width="40" height="26" viewBox="0 0 40 26"><path d="M12.5 5 V7 H23 V5 M12.5 20 V18 H23 V20" fill="none" stroke="#fff" stroke-width="1.2"/><rect x="12.6" y="9.6" width="10.3" height="6.2" fill="none" stroke="#fff" stroke-width="1.2"/><path d="M26.6 5 V20" stroke="#fff" stroke-width="1.2"/><rect x="25" y="9.2" width="3.2" height="3" fill="#fff"/></svg>
<svg style="left:398px;top:736px;" width="28" height="24" viewBox="0 0 28 24"><defs><linearGradient id="cpl" x1="0" y1="0" x2="0" y2="1"><stop offset="0" stop-color="#1aa3f0"/><stop offset="0.45" stop-color="#4cc870"/><stop offset="0.75" stop-color="#f5c02a"/><stop offset="1" stop-color="#f08a2a"/></linearGradient><linearGradient id="cpr" x1="0" y1="0" x2="0" y2="1"><stop offset="0" stop-color="#b35ad8"/><stop offset="0.45" stop-color="#e06aa8"/><stop offset="0.8" stop-color="#e8996a"/><stop offset="1" stop-color="#f5c060"/></linearGradient></defs><path d="M7 2.5 Q8 2 10 2 H16.5 Q19 2 19.5 4 L20 5.5 H15.5 Q14 5.5 13.5 7 L10.5 16 Q10 17.3 8 17.3 H5 Q2.5 17.3 2.5 14.8 L6 4 Z" fill="url(#cpl)"/><path d="M19.5 5.3 Q20.5 5 22.5 5 Q25 5.5 24.5 8 L21.5 19 Q21 22 18 22 H10 Q7.5 22 7 20 L6.5 18.5 H11 Q12.5 18.5 13 17 L16.5 8 Q17 5.8 19.5 5.3 Z" fill="url(#cpr)"/></svg>
<svg style="left:447px;top:737px;" width="26" height="22" viewBox="0 0 26 22"><path d="M1.5 3 A1.5 1.5 0 0 1 3 1.5 H9 L11 3.5 H22.5 A1.5 1.5 0 0 1 24 5 V19.5 A1.5 1.5 0 0 1 22.5 21 H3 A1.5 1.5 0 0 1 1.5 19.5 Z" fill="#e8b530"/><rect x="1.5" y="6" width="22.5" height="15" rx="1" fill="#fcd463"/><path d="M6.5 21 V15.5 Q6.5 14 8 14 H17.5 Q19 14 19 15.5 V21 H15.5 V17.5 H10 V21 Z" fill="#2b7cd3"/></svg>
<div class="a" style="left:440px;top:765px;width:40px;height:3px;background:#99e3f7;"></div>
<svg style="left:496px;top:735px;" width="26" height="26" viewBox="0 0 26 26"><defs><linearGradient id="eg" x1="0" y1="0" x2="1" y2="0.6"><stop offset="0" stop-color="#2bb6f2"/><stop offset="0.55" stop-color="#34c6d8"/><stop offset="1" stop-color="#62d250"/></linearGradient></defs><circle cx="13" cy="13" r="12" fill="url(#eg)"/><path d="M1.2 11 C3 7.5 7 6.8 10.5 7.5 C14 8.3 15.5 11 15 14 C14.5 16.5 16 18 19 18 C21 18 23 17.5 24.5 16.5 C23 21.5 18.5 25 13 25 C6.4 25 1 19.6 1 13 C1 12.3 1.1 11.6 1.2 11 Z" fill="#1a86db"/><path d="M6 21 C9 23.5 14 24 18 22.5 C20.5 21.5 22.5 19.8 23.8 17.5 C21 19 17 19.5 14 18.5 Z" fill="#1c56a8"/><path d="M10 11.5 C11.5 10 14 10.5 14.5 12.5 C15 14.5 14 16.5 15.5 17.5 C13 17.8 10.5 16.5 10 14 Z" fill="#1c2a2f"/><circle cx="6.5" cy="18.8" r="5.6" fill="#d9d9d9"/><circle cx="6.5" cy="17.3" r="2" fill="#8a8a8a"/><path d="M3 22.3 C3.8 20.2 9.2 20.2 10 22.3" fill="#8a8a8a"/></svg>
<svg style="left:545px;top:735px;" width="26" height="26" viewBox="0 0 26 26"><path d="M8 7 V5 A5 5 0 0 1 18 5 V7" fill="none" stroke="#30a0e0" stroke-width="1.6"/><rect x="2" y="7" width="22" height="17" rx="2" fill="#f3f3f3"/><path d="M2 7 H24 V10 H2 Z" fill="#dcdcdc"/><rect x="8" y="11.5" width="4.5" height="4.5" fill="#f25022"/><rect x="13.5" y="11.5" width="4.5" height="4.5" fill="#7fba00"/><rect x="8" y="17" width="4.5" height="4.5" fill="#00a4ef"/><rect x="13.5" y="17" width="4.5" height="4.5" fill="#ffb900"/></svg>
<svg style="left:594px;top:736px;" width="26" height="25" viewBox="0 0 26 25"><path d="M6 9 L15 2 L24 9 V21 A2 2 0 0 1 22 23 H8 A2 2 0 0 1 6 21 Z" fill="#1490df"/><path d="M6 9 L15 15 L24 9 V21 A2 2 0 0 1 22 23 H8 A2 2 0 0 1 6 21 Z" fill="#28a8ea"/><rect x="1" y="10" width="12" height="12" rx="2" fill="#0a64b4"/><circle cx="7" cy="16" r="3" fill="none" stroke="#fff" stroke-width="1.8"/></svg>
<svg style="left:643px;top:735px;" width="26" height="26" viewBox="0 0 26 26"><circle cx="12" cy="12" r="11.5" fill="#db4437"/><path d="M12 12 L1.5 8 A11.5 11.5 0 0 0 12 23.5 Z" fill="#0f9d58"/><path d="M12 12 L23 8 A11.5 11.5 0 0 1 12 23.5 Z" fill="#f4b400"/><circle cx="12" cy="12" r="5" fill="#fff"/><circle cx="12" cy="12" r="4" fill="#4285f4"/><circle cx="19.5" cy="19.5" r="6" fill="#c5372c"/><text x="19.5" y="22" font-size="7" fill="#fff" text-anchor="middle" font-family="Liberation Sans">m</text></svg>
<div class="a" style="left:636px;top:765px;width:40px;height:3px;background:#99e3f7;"></div>
<div class="a" style="left:681px;top:728px;width:48px;height:40px;background:#485356;"></div>
<svg style="left:693px;top:736px;" width="24" height="24" viewBox="0 0 24 24"><circle cx="12" cy="12" r="11" fill="#f5f5f5"/><path d="M7 20 L12 5 L17 20 M8.5 15 H15.5" fill="none" stroke="#3870d6" stroke-width="2"/><circle cx="12" cy="5.5" r="1.8" fill="#2b3b8a"/><path d="M16 10 L19 12 L16 14 Z" fill="#3ddc84"/></svg>
<div class="a" style="left:681px;top:765px;width:48px;height:3px;background:#99e3f7;"></div>
<svg style="left:741px;top:736px;" width="24" height="24" viewBox="0 0 24 24"><path d="M5 2 H21 L18 22 H2 Z" fill="#9fd0ef"/><path d="M5 2 H21 L20 6 H4.5 Z" fill="#5aa8d8"/><path d="M6 9 H18 M5.5 12 H17.5 M5 15 H17 M4.5 18 H16.5" stroke="#e8f4fb" stroke-width="0.8"/><path d="M18 22 L21 2 L23 3 L20 22 Z" fill="#c8c8c8"/></svg>
<div class="a" style="left:734px;top:765px;width:40px;height:3px;background:#99e3f7;"></div>
<svg style="left:1122px;top:743px;" width="14" height="9" viewBox="0 0 14 9"><path d="M1 7.5 L7 1.5 L13 7.5" stroke="#fff" stroke-width="1.2" fill="none"/></svg>
<svg style="left:1144px;top:741px;" width="19" height="14" viewBox="0 0 19 14"><path d="M1.5 5 H4.5 L8.5 1.5 V12.5 L4.5 9 H1.5 Z" stroke="#fff" stroke-width="1.2" fill="none"/><path d="M11 4.5 A3.5 3.5 0 0 1 11 9.5 M13.5 2.5 A6 6 0 0 1 13.5 11.5 M16 1 A8.5 8.5 0 0 1 16 13" stroke="#fff" stroke-width="1.2" fill="none" stroke-width="1"/></svg>
<svg style="left:1168px;top:742px;" width="19" height="12" viewBox="0 0 19 12"><rect x="4.5" y="2" width="12" height="8" stroke="#fff" stroke-width="1.2" fill="none"/><path d="M16.5 4.5 H18 V7.5 H16.5" stroke="#fff" stroke-width="1.2" fill="none"/><rect x="6" y="3.5" width="6" height="5" fill="#fff"/><path d="M1 4 H4 M2 2.5 V5.5" stroke="#fff" stroke-width="1.2" fill="none"/></svg>
<svg style="left:1195px;top:741px;" width="15" height="15" viewBox="0 0 15 15"><path d="M1.5 13.5 A12 12 0 0 1 13.5 1.5 M4.5 13.5 A9 9 0 0 1 13.5 4.5 M7.5 13.5 A6 6 0 0 1 13.5 7.5" fill="none" stroke="#fff" stroke-width="1.3"/><circle cx="12.3" cy="12.3" r="1.5" fill="#fff"/></svg>
<div class="tx" style="left:1219px;top:738.21px;font-size:11.8px;color:#ffffff;font-family:'Liberation Sans',sans-serif;transform:scaleX(0.86);transform-origin:0 0;">ENG</div>
<div class="tx" style="left:1257px;top:729.01px;font-size:12.1px;color:#ffffff;font-family:'Liberation Sans',sans-serif;transform:scaleX(0.935);transform-origin:0 0;">11:18 PM</div>
<div class="tx" style="left:1256px;top:746.81px;font-size:12.1px;color:#ffffff;font-family:'Liberation Sans',sans-serif;transform:scaleX(0.945);transform-origin:0 0;">1/25/2026</div>
<svg style="left:1324px;top:739px;" width="19" height="19" viewBox="0 0 19 19"><path d="M1.5 1.5 H16.5 V13 H11 L9 15.5 L7 13 H1.5 Z" fill="none" stroke="#fff" stroke-width="1.2"/></svg>
<div class="a" style="left:1361px;top:732px;width:1px;height:32px;background:#5a6a6f;"></div>
<div class="tx" style="left:600.5px;top:725.29px;font-size:28.9px;color:#aaaaac;font-family:'Liberation Sans',sans-serif;-webkit-text-stroke:0.7px #aaaaac;opacity:0.55;">mostaql.com</div>
<svg style="left:0;top:0" width="1366" height="768" viewBox="0 0 1366 768"><path d="M620 697.6 C609 697.6 604.6 704 604.6 709.5 C604.6 716.5 610 721.2 620 721 C630 720.8 640 716.8 650 716.8 H750" fill="none" stroke="rgba(170,170,172,0.55)" stroke-width="7.2" stroke-linecap="round"/><path d="M629 681.5 V713" stroke="rgba(170,170,172,0.55)" stroke-width="7.2" stroke-linecap="round"/><circle cx="656" cy="705.5" r="11" fill="none" stroke="rgba(170,170,172,0.55)" stroke-width="7.2"/><path d="M682.5 697.5 V713 M704.5 697.5 V713 M724.5 697.5 V713" stroke="rgba(170,170,172,0.55)" stroke-width="7.2" stroke-linecap="round"/><circle cx="749.5" cy="709.6" r="12" fill="none" stroke="rgba(170,170,172,0.55)" stroke-width="7.2"/><circle cx="649.6" cy="682" r="4.6" fill="rgba(170,170,172,0.55)"/><circle cx="661.4" cy="682" r="4.6" fill="rgba(170,170,172,0.55)"/><circle cx="678.7" cy="691.4" r="4.6" fill="rgba(170,170,172,0.55)"/><circle cx="690.2" cy="691.4" r="4.6" fill="rgba(170,170,172,0.55)"/></svg>
</body></html>
